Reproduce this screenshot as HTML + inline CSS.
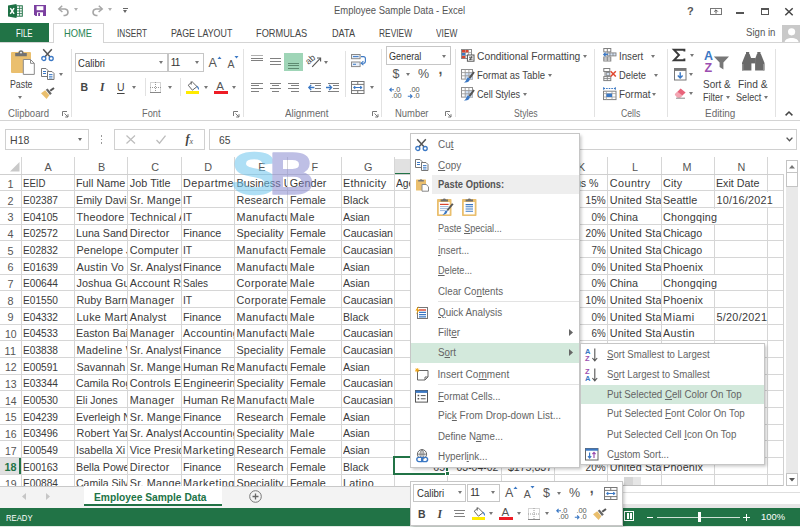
<!DOCTYPE html><html><head><meta charset="utf-8"><title>Employee Sample Data - Excel</title><style>
*{box-sizing:border-box;margin:0;padding:0}
html,body{width:800px;height:527px;overflow:hidden;background:#fff}
body{position:relative;font-family:"Liberation Sans",sans-serif;font-size:11px;color:#444}
.a{position:absolute}
svg{overflow:visible}
.t{position:absolute;white-space:nowrap;line-height:14px}
.dd{position:absolute;width:0;height:0;border-left:2.5px solid transparent;border-right:2.5px solid transparent;border-top:3px solid #777}
.cell{position:absolute;height:17px;line-height:17px;font-size:10.8px;color:#3a3a3a;white-space:nowrap;overflow:hidden}
.vl{position:absolute;width:1px;background:#d9d9d9}
.hl{position:absolute;height:1px;background:#d9d9d9}
u{text-decoration:underline;text-underline-offset:1px;text-decoration-thickness:1px}
</style></head><body>
<div class="a" style="left:0px;top:0px;width:800px;height:22px;background:#fff;"></div>
<div class="t" style="left:333.6px;top:4.4px;font-size:10px;color:#555;transform:scaleX(0.947);transform-origin:0 50%;">Employee Sample Data - Excel</div>
<svg class="a" style="left:8px;top:4px;" width="15" height="14" viewBox="0 0 15 14"><path d="M0 1.6 L8.5 0 V14 L0 12.4Z" fill="#1e7145"/><rect x="8.5" y="1.8" width="5.8" height="10.4" fill="#fff" stroke="#1e7145" stroke-width="1"/><path d="M9 4.4h5M9 7h5M9 9.6h5M11.6 2v10" stroke="#1e7145" stroke-width=".8"/><path d="M2.3 4.2l3.8 5.6M6.1 4.2L2.3 9.8" stroke="#fff" stroke-width="1.5"/></svg>
<svg class="a" style="left:33.5px;top:5px;" width="12" height="11" viewBox="0 0 12 11"><path d="M0 0H12V11H1.5L0 9.5Z" fill="#7b3fa0"/><rect x="2.6" y="1.2" width="6.8" height="4" fill="#fff"/><rect x="3" y="7.3" width="6" height="3.7" fill="#fff"/><rect x="4.2" y="8" width="1.8" height="3" fill="#7b3fa0"/></svg>
<svg class="a" style="left:58px;top:5px;" width="12" height="11" viewBox="0 0 12 11"><path d="M4.2 0.8 L0.8 4 L4.4 7" fill="none" stroke="#a6a6a6" stroke-width="1.5"/><path d="M1 4 H7 A3.6 3.3 0 0 1 7 10.5 H5.5" fill="none" stroke="#a6a6a6" stroke-width="1.6"/></svg>
<div class="dd" style="left:74.0px;top:8.3px;border-top-color:#b0b0b0"></div>
<svg class="a" style="left:91px;top:5px;" width="12" height="11" viewBox="0 0 12 11"><path d="M7.8 0.8 L11.2 4 L7.6 7" fill="none" stroke="#a6a6a6" stroke-width="1.5"/><path d="M11 4 H5 A3.6 3.3 0 0 0 5 10.5 H6.5" fill="none" stroke="#a6a6a6" stroke-width="1.6"/></svg>
<div class="dd" style="left:107.5px;top:8.3px;border-top-color:#b0b0b0"></div>
<div class="a" style="left:122.5px;top:8px;width:5px;height:1px;background:#666;"></div>
<div class="dd" style="left:122.5px;top:10.1px;border-top-color:#666"></div>
<div class="t" style="left:687.0px;top:4.4px;font-size:11px;color:#555;font-weight:bold;">?</div>
<svg class="a" style="left:710px;top:8px;" width="12" height="7" viewBox="0 0 12 7"><rect x=".5" y=".5" width="11" height="6" fill="#fff" stroke="#777" stroke-width="1"/><path d="M6 2v3.6M4.2 3.6L6 1.8l1.8 1.8" stroke="#555" stroke-width="1" fill="none"/></svg>
<div class="a" style="left:736px;top:12px;width:8px;height:2px;background:#555;"></div>
<div class="a" style="left:760.5px;top:7.5px;width:8.5px;height:7.5px;border:1px solid #555;border-top:2px solid #555"></div>
<svg class="a" style="left:785px;top:7.5px;" width="8" height="7.5" viewBox="0 0 8 7.5"><path d="M.3 .3L7.7 7.2M7.7 .3L.3 7.2" stroke="#444" stroke-width="1.5"/></svg>
<div class="a" style="left:0px;top:22px;width:800px;height:21px;background:#fff;"></div>
<div class="a" style="left:0px;top:22.7px;width:49px;height:19.8px;background:#217346;"></div>
<div class="t" style="left:16.3px;top:25.6px;font-size:10.5px;color:#fff;transform:scaleX(0.749);transform-origin:0 50%;">FILE</div>
<div class="a" style="left:53px;top:22.7px;width:51px;height:20.3px;background:#fff;border:1px solid #d4d4d4;border-bottom:none;z-index:2"></div>
<div class="t" style="left:63.9px;top:25.6px;font-size:10.5px;color:#2a8556;transform:scaleX(0.889);transform-origin:0 50%;z-index:3;">HOME</div>
<div class="t" style="left:117.0px;top:25.6px;font-size:10.5px;color:#444;transform:scaleX(0.783);transform-origin:0 50%;">INSERT</div>
<div class="t" style="left:171.2px;top:25.6px;font-size:10.5px;color:#444;transform:scaleX(0.845);transform-origin:0 50%;">PAGE LAYOUT</div>
<div class="t" style="left:256.3px;top:25.6px;font-size:10.5px;color:#444;transform:scaleX(0.878);transform-origin:0 50%;">FORMULAS</div>
<div class="t" style="left:332.0px;top:25.6px;font-size:10.5px;color:#444;transform:scaleX(0.870);transform-origin:0 50%;">DATA</div>
<div class="t" style="left:379.4px;top:25.6px;font-size:10.5px;color:#444;transform:scaleX(0.799);transform-origin:0 50%;">REVIEW</div>
<div class="t" style="left:436.3px;top:25.6px;font-size:10.5px;color:#444;transform:scaleX(0.794);transform-origin:0 50%;">VIEW</div>
<div class="t" style="left:745.6px;top:24.6px;font-size:10.5px;color:#555;transform:scaleX(0.916);transform-origin:0 50%;">Sign in</div>
<div class="a" style="left:781.6px;top:25px;width:18.4px;height:17.5px;background:#c9c9c9;"></div>
<svg class="a" style="left:781.6px;top:25px;" width="18.4" height="17.5" viewBox="0 0 18.4 17.5"><circle cx="9.6" cy="6.8" r="3.6" fill="#fff"/><path d="M2.6 17.5 C2.6 11.5 16.6 11.5 16.6 17.5Z" fill="#fff"/></svg>
<div class="a" style="left:0px;top:42px;width:800px;height:79px;background:#fff;border-top:1px solid #d4d4d4;border-bottom:1px solid #d4d4d4"></div>
<div class="t" style="left:8.2px;top:106.6px;font-size:10px;color:#6a6a6a;transform:scaleX(0.958);transform-origin:0 50%;">Clipboard</div>
<div class="t" style="left:141.7px;top:106.6px;font-size:10px;color:#6a6a6a;transform:scaleX(0.925);transform-origin:0 50%;">Font</div>
<div class="t" style="left:284.5px;top:106.6px;font-size:10px;color:#6a6a6a;transform:scaleX(0.978);transform-origin:0 50%;">Alignment</div>
<div class="t" style="left:394.5px;top:106.6px;font-size:10px;color:#6a6a6a;transform:scaleX(0.942);transform-origin:0 50%;">Number</div>
<div class="t" style="left:513.7px;top:106.6px;font-size:10px;color:#6a6a6a;transform:scaleX(0.863);transform-origin:0 50%;">Styles</div>
<div class="t" style="left:621.2px;top:106.6px;font-size:10px;color:#6a6a6a;transform:scaleX(0.868);transform-origin:0 50%;">Cells</div>
<div class="t" style="left:705.0px;top:106.6px;font-size:10px;color:#6a6a6a;transform:scaleX(0.994);transform-origin:0 50%;">Editing</div>
<div class="a" style="left:71px;top:49px;width:1px;height:68px;background:#e2e2e2;"></div>
<div class="a" style="left:243px;top:49px;width:1px;height:68px;background:#e2e2e2;"></div>
<div class="a" style="left:381px;top:49px;width:1px;height:68px;background:#e2e2e2;"></div>
<div class="a" style="left:454.5px;top:49px;width:1px;height:68px;background:#e2e2e2;"></div>
<div class="a" style="left:594px;top:49px;width:1px;height:68px;background:#e2e2e2;"></div>
<div class="a" style="left:666.5px;top:49px;width:1px;height:68px;background:#e2e2e2;"></div>
<div class="a" style="left:775.3px;top:49px;width:1px;height:68px;background:#e2e2e2;"></div>
<div class="a" style="left:144.5px;top:78px;width:1px;height:18px;background:#e2e2e2;"></div>
<div class="a" style="left:179.5px;top:78px;width:1px;height:18px;background:#e2e2e2;"></div>
<div class="a" style="left:345px;top:51px;width:1px;height:46px;background:#e2e2e2;"></div>
<svg class="a" style="left:61.5px;top:111px;" width="7" height="7" viewBox="0 0 7 7"><path d="M.5 5V.5H5" fill="none" stroke="#777" stroke-width="1"/><path d="M2.5 2.5L6 6M6 3.2V6H3.2" fill="none" stroke="#777" stroke-width="1"/></svg>
<svg class="a" style="left:233px;top:111px;" width="7" height="7" viewBox="0 0 7 7"><path d="M.5 5V.5H5" fill="none" stroke="#777" stroke-width="1"/><path d="M2.5 2.5L6 6M6 3.2V6H3.2" fill="none" stroke="#777" stroke-width="1"/></svg>
<svg class="a" style="left:372px;top:111px;" width="7" height="7" viewBox="0 0 7 7"><path d="M.5 5V.5H5" fill="none" stroke="#777" stroke-width="1"/><path d="M2.5 2.5L6 6M6 3.2V6H3.2" fill="none" stroke="#777" stroke-width="1"/></svg>
<svg class="a" style="left:444.5px;top:111px;" width="7" height="7" viewBox="0 0 7 7"><path d="M.5 5V.5H5" fill="none" stroke="#777" stroke-width="1"/><path d="M2.5 2.5L6 6M6 3.2V6H3.2" fill="none" stroke="#777" stroke-width="1"/></svg>
<svg class="a" style="left:785px;top:110.5px;" width="8" height="5" viewBox="0 0 8 5"><path d="M.6 4.4L4 1L7.4 4.4" fill="none" stroke="#444" stroke-width="1.5"/></svg>
<svg class="a" style="left:10.5px;top:50px;" width="24" height="25" viewBox="0 0 24 25"><rect x="0" y="2" width="20" height="21" rx="1" fill="#eabf6e"/><path d="M4.2 6.2V3H7.4A2.6 2.8 0 0 1 12.6 3H15.8V6.2Z" fill="#737373"/><circle cx="10" cy="2.6" r=".9" fill="#fff"/><path d="M12.3 9.5H19.5L23.3 13.3V24.4H12.3Z" fill="#fff" stroke="#8a8a8a" stroke-width="1"/><path d="M19.5 9.5V13.3H23.3" fill="none" stroke="#8a8a8a" stroke-width="1"/></svg>
<div class="t" style="left:9.5px;top:77.5px;font-size:10px;color:#444;transform:scaleX(0.880);transform-origin:0 50%;">Paste</div>
<div class="dd" style="left:18.0px;top:95.7px;border-top-color:#777"></div>
<svg class="a" style="left:41px;top:48.7px;" width="13" height="12" viewBox="0 0 13 12"><path d="M2.2 .3L9.2 8M10.8 .3L3.8 8" stroke="#555" stroke-width="1.5" fill="none"/><circle cx="2.8" cy="9.5" r="2" fill="none" stroke="#3b78c4" stroke-width="1.3"/><circle cx="10.2" cy="9.5" r="2" fill="none" stroke="#3b78c4" stroke-width="1.3"/></svg>
<svg class="a" style="left:40.5px;top:68px;" width="14" height="12" viewBox="0 0 14 12"><path d="M.5 .5H5L7 2.5V8.5H.5Z" fill="#fff" stroke="#777" stroke-width="1"/><path d="M2 3.5h3M2 5.5h3" stroke="#3b78c4" stroke-width="1"/><path d="M6.5 3.5H11L13 5.5V11.5H6.5Z" fill="#fff" stroke="#777" stroke-width="1"/><path d="M8 6.5h3.5M8 8.3h3.5M8 10h3.5" stroke="#3b78c4" stroke-width=".9"/></svg>
<div class="dd" style="left:58.5px;top:72.5px;border-top-color:#777"></div>
<svg class="a" style="left:41px;top:87px;" width="14" height="12" viewBox="0 0 14 12"><path d="M0 6.3L4.2 3.2L8.4 8.2L5.6 12Z" fill="#eabf6e"/><path d="M4.8 2.8L6.6 1.4L10.8 6.6L9 8Z" fill="#666"/><path d="M8.6 2.9L12.4 .2L13.6 1.8L9.9 4.6Z" fill="#555"/></svg>
<div class="a" style="left:75px;top:52.5px;width:92.5px;height:19px;background:#fff;border:1px solid #c6c6c6"></div>
<div class="t" style="left:78.0px;top:55.5px;font-size:10.5px;color:#333;transform:scaleX(0.907);transform-origin:0 50%;">Calibri</div>
<div class="dd" style="left:158.5px;top:61.0px;border-top-color:#777"></div>
<div class="a" style="left:167.5px;top:52.5px;width:36px;height:19px;background:#fff;border:1px solid #c6c6c6"></div>
<div class="t" style="left:170.7px;top:55.5px;font-size:10px;color:#333;letter-spacing:-0.8px;">11</div>
<div class="dd" style="left:194.5px;top:61.0px;border-top-color:#777"></div>
<div class="t" style="left:208.5px;top:56.0px;font-size:12.5px;color:#555;">A</div>
<svg class="a" style="left:216.5px;top:55.5px;" width="5" height="3" viewBox="0 0 5 3"><path d="M.5 3L2.5 .4L4.5 3Z" fill="#3b78c4"/></svg>
<div class="t" style="left:227.5px;top:57.0px;font-size:10.5px;color:#555;">A</div>
<svg class="a" style="left:234.0px;top:55.5px;" width="5" height="3" viewBox="0 0 5 3"><path d="M.5 0L2.5 2.6L4.5 0Z" fill="#3b78c4"/></svg>
<div class="t" style="left:80.5px;top:80.0px;font-size:10.5px;color:#444;font-weight:bold;">B</div>
<div class="t" style="left:100.0px;top:80.0px;font-size:10.5px;color:#444;font-family:'Liberation Serif',serif;font-style:italic;font-weight:bold;font-size:11.5px;">I</div>
<div class="t" style="left:117.0px;top:79.5px;font-size:10.5px;color:#444;text-decoration:underline;text-underline-offset:1.5px;">U</div>
<div class="dd" style="left:132.0px;top:86.0px;border-top-color:#777"></div>
<svg class="a" style="left:150px;top:82px;" width="11" height="11" viewBox="0 0 11 11"><rect x=".5" y=".5" width="10" height="10" fill="none" stroke="#aaa" stroke-width="1" stroke-dasharray="1 1"/><path d="M5.5 0V11M0 5.5H11" stroke="#999" stroke-width="1" stroke-dasharray="1 1"/><path d="M0 10.5H11" stroke="#888" stroke-width="1"/></svg>
<div class="dd" style="left:168.0px;top:86.0px;border-top-color:#777"></div>
<svg class="a" style="left:186px;top:81px;" width="14" height="13" viewBox="0 0 14 13"><path d="M2.2 4.2L6.2 .8L11 5.6L6.4 9.2Z" fill="#fff" stroke="#666" stroke-width="1"/><path d="M5.2 .3V3.6" stroke="#666" stroke-width="1"/><path d="M10.6 4.6C12.4 5.4 13.2 7 13 9C12 8.2 11 7 10.6 4.6Z" fill="#3b78c4"/><rect x="0" y="10" width="13" height="3" fill="#ffeb00"/></svg>
<div class="dd" style="left:203.5px;top:86.0px;border-top-color:#777"></div>
<div class="t" style="left:216.2px;top:78.5px;font-size:11.5px;color:#555;">A</div>
<div class="a" style="left:214px;top:91px;width:13.5px;height:3px;background:#ee1c25;"></div>
<div class="dd" style="left:232.0px;top:86.0px;border-top-color:#777"></div>
<div class="a" style="left:251px;top:54.7px;width:11.5px;height:1px;background:#b0b0b0;"></div>
<div class="a" style="left:251.0px;top:57.5px;width:11.5px;height:1px;background:#808080;"></div>
<div class="a" style="left:251.0px;top:60.3px;width:11.5px;height:1px;background:#808080;"></div>
<div class="a" style="left:269.5px;top:58.2px;width:11.5px;height:1px;background:#808080;"></div>
<div class="a" style="left:269.5px;top:61.0px;width:11.5px;height:1px;background:#808080;"></div>
<div class="a" style="left:269.5px;top:63.800000000000004px;width:11.5px;height:1px;background:#808080;"></div>
<div class="a" style="left:284px;top:52.5px;width:18.5px;height:18.5px;background:#9fd5b7;"></div>
<div class="a" style="left:287.5px;top:62.5px;width:11.5px;height:1px;background:#5d8a70;"></div>
<div class="a" style="left:287.5px;top:65.3px;width:11.5px;height:1px;background:#5d8a70;"></div>
<div class="a" style="left:287.5px;top:68.1px;width:11.5px;height:1px;background:#5d8a70;"></div>
<svg class="a" style="left:307.5px;top:54px;" width="14" height="13" viewBox="0 0 14 13"><path d="M4.2 12.8L12.2 4.4" stroke="#555" stroke-width="1.1"/><path d="M9 4L12.6 4L12.6 7.6" fill="none" stroke="#555" stroke-width="1.1"/><text x="-1" y="8.6" font-size="9" font-family="Liberation Sans, sans-serif" fill="#444" transform="rotate(-42 3 8)">ab</text></svg>
<div class="dd" style="left:323.5px;top:61.0px;border-top-color:#777"></div>
<svg class="a" style="left:351px;top:54.4px;" width="15.5" height="13.6" viewBox="0 0 15.5 13.6"><rect x=".5" y=".5" width="8.6" height="4.2" fill="#e6edf7" stroke="#8a8a8a" stroke-width="1"/><rect x=".5" y="8" width="8.6" height="4.6" fill="#e6edf7" stroke="#8a8a8a" stroke-width="1"/><path d="M2 2.6h5.6M2 10.3h3" stroke="#3b78c4" stroke-width="1"/><path d="M10 2.6H12.4A2 2 0 0 1 14.4 4.6V7.2A2 2 0 0 1 12.4 9.2H10.4" fill="none" stroke="#3b78c4" stroke-width="1.1"/><path d="M12.4 7.2L10.2 9.2L12.4 11.2" fill="none" stroke="#3b78c4" stroke-width="1.1"/></svg>
<div class="a" style="left:251.0px;top:82.5px;width:11.5px;height:1px;background:#808080;"></div>
<div class="a" style="left:251.0px;top:85.4px;width:8px;height:1px;background:#808080;"></div>
<div class="a" style="left:251.0px;top:88.3px;width:11.5px;height:1px;background:#808080;"></div>
<div class="a" style="left:251.0px;top:91.2px;width:8px;height:1px;background:#808080;"></div>
<div class="a" style="left:269.5px;top:82.5px;width:11.5px;height:1px;background:#808080;"></div>
<div class="a" style="left:271.5px;top:85.4px;width:7.5px;height:1px;background:#808080;"></div>
<div class="a" style="left:269.5px;top:88.3px;width:11.5px;height:1px;background:#808080;"></div>
<div class="a" style="left:271.5px;top:91.2px;width:7.5px;height:1px;background:#808080;"></div>
<div class="a" style="left:287.5px;top:82.5px;width:11.5px;height:1px;background:#808080;"></div>
<div class="a" style="left:291.0px;top:85.4px;width:8px;height:1px;background:#808080;"></div>
<div class="a" style="left:287.5px;top:88.3px;width:11.5px;height:1px;background:#808080;"></div>
<div class="a" style="left:291.0px;top:91.2px;width:8px;height:1px;background:#808080;"></div>
<div class="a" style="left:310.0px;top:82.5px;width:11px;height:1px;background:#808080;"></div>
<div class="a" style="left:314.5px;top:85.4px;width:6.5px;height:1px;background:#808080;"></div>
<div class="a" style="left:314.5px;top:88.3px;width:6.5px;height:1px;background:#808080;"></div>
<div class="a" style="left:310.0px;top:91.2px;width:11px;height:1px;background:#808080;"></div>
<svg class="a" style="left:307.5px;top:83.9px;" width="7" height="7" viewBox="0 0 7 7"><path d="M6.4 3.5H.8M3.2 .9L.8 3.5L3.2 6.1" fill="none" stroke="#3b78c4" stroke-width="1.3"/></svg>
<div class="a" style="left:328.2px;top:82.5px;width:11px;height:1px;background:#808080;"></div>
<div class="a" style="left:332.7px;top:85.4px;width:6.5px;height:1px;background:#808080;"></div>
<div class="a" style="left:332.7px;top:88.3px;width:6.5px;height:1px;background:#808080;"></div>
<div class="a" style="left:328.2px;top:91.2px;width:11px;height:1px;background:#808080;"></div>
<svg class="a" style="left:325.7px;top:83.9px;" width="7" height="7" viewBox="0 0 7 7"><path d="M0 3.5H5.6M3.2 .9L5.6 3.5L3.2 6.1" fill="none" stroke="#3b78c4" stroke-width="1.3"/></svg>
<svg class="a" style="left:351px;top:81px;" width="13.5" height="13" viewBox="0 0 13.5 13"><rect x=".5" y=".5" width="12.5" height="12" fill="#fff" stroke="#777" stroke-width="1"/><path d="M.5 3.4H13M.5 9.6H13M6.75 .5V3.4M6.75 9.6V12.5" stroke="#777" stroke-width="1"/><path d="M2.8 6.5H10.7M4.2 5.1L2.8 6.5L4.2 7.9M9.3 5.1L10.7 6.5L9.3 7.9" fill="none" stroke="#3b78c4" stroke-width="1.1"/></svg>
<div class="dd" style="left:369.5px;top:86.0px;border-top-color:#777"></div>
<div class="a" style="left:386px;top:46px;width:65px;height:19px;background:#fff;border:1px solid #c6c6c6"></div>
<div class="t" style="left:388.7px;top:48.8px;font-size:10.5px;color:#333;transform:scaleX(0.865);transform-origin:0 50%;">General</div>
<div class="dd" style="left:442.0px;top:54.5px;border-top-color:#777"></div>
<div class="t" style="left:392.5px;top:67.0px;font-size:12.5px;color:#555;">$</div>
<div class="dd" style="left:406.2px;top:73.0px;border-top-color:#777"></div>
<div class="t" style="left:418.0px;top:67.0px;font-size:12.5px;color:#555;">%</div>
<div class="t" style="left:438.5px;top:61.5px;font-size:14px;color:#555;font-weight:bold;">,</div>
<svg class="a" style="left:388.7px;top:87.3px;" width="12" height="12" viewBox="0 0 12 12"><text x="5.2" y="5" font-size="7.4" font-family="Liberation Sans, sans-serif" fill="#555">.0</text><text x="2.4" y="11" font-size="7.4" font-family="Liberation Sans, sans-serif" fill="#555">.00</text><path d="M5 2.7H.8M2.6 .9L.8 2.7L2.6 4.5" fill="none" stroke="#3b78c4" stroke-width="1.1"/></svg>
<svg class="a" style="left:407.3px;top:87.3px;" width="12" height="12" viewBox="0 0 12 12"><text x="2.4" y="5" font-size="7.4" font-family="Liberation Sans, sans-serif" fill="#555">.00</text><text x="6.4" y="11" font-size="7.4" font-family="Liberation Sans, sans-serif" fill="#555">.0</text><path d="M.8 9.3H5M3.2 7.5L5 9.3L3.2 11.1" fill="none" stroke="#3b78c4" stroke-width="1.1"/></svg>
<svg class="a" style="left:460.7px;top:48.7px;" width="13.5" height="12.5" viewBox="0 0 13.5 12.5"><rect x=".5" y=".5" width="10" height="9" fill="#fff" stroke="#8a8a8a"/><path d="M.5 3.6H10.5M.5 6.6H10.5M4.4 .5V9.5M7.6 .5V9.5" stroke="#9a9a9a" stroke-width=".8"/><rect x="1" y="1" width="3.2" height="2.4" fill="#d9442f"/><rect x="1" y="4" width="3.2" height="2.4" fill="#3b78c4"/><rect x="1" y="7" width="3.2" height="2.2" fill="#d9442f"/><rect x="4.8" y="1" width="2.6" height="2.4" fill="#d9442f"/><rect x="6.4" y="6" width="6.6" height="6.2" fill="#fff" stroke="#555"/><path d="M8 8.2h3.6M8 10.2h3.6M10.8 7.2l-1.8 4" stroke="#444" stroke-width=".9"/></svg>
<div class="t" style="left:477.0px;top:48.8px;font-size:10.5px;color:#444;transform:scaleX(0.978);transform-origin:0 50%;">Conditional Formatting</div>
<div class="dd" style="left:582.5px;top:54.5px;border-top-color:#777"></div>
<svg class="a" style="left:460.7px;top:68.5px;" width="14" height="14" viewBox="0 0 14 14"><rect x=".5" y=".5" width="11" height="9.6" fill="#fff" stroke="#8f8f8f"/><rect x="4.2" y="3.6" width="7.3" height="6.5" fill="#cfdff3"/><path d="M.5 3.6H11.5M.5 6.8H11.5M4.2 .5V10M7.9 .5V10" stroke="#9a9a9a" stroke-width=".9"/><path d="M13.8 3.6L9.4 9.8L7.6 8.6L12.2 2.4Z" fill="#555"/><path d="M9 9.4C9 12 6.6 14 2.8 13.4C4.8 12.6 5.2 10.6 6.6 8.4Z" fill="#3b78c4"/></svg>
<div class="t" style="left:477.0px;top:67.6px;font-size:10.5px;color:#444;transform:scaleX(0.906);transform-origin:0 50%;">Format as Table</div>
<div class="dd" style="left:547.5px;top:73.5px;border-top-color:#777"></div>
<svg class="a" style="left:460.7px;top:87.3px;" width="14" height="14" viewBox="0 0 14 14"><rect x=".5" y=".5" width="11" height="9.6" fill="#fff" stroke="#8f8f8f"/><rect x="4.2" y="3.6" width="7.3" height="6.5" fill="#cfdff3"/><path d="M.5 3.6H11.5M.5 6.8H11.5M4.2 .5V10M7.9 .5V10" stroke="#9a9a9a" stroke-width=".9"/><path d="M13.8 3.6L9.4 9.8L7.6 8.6L12.2 2.4Z" fill="#555"/><path d="M9 9.4C9 12 6.6 14 2.8 13.4C4.8 12.6 5.2 10.6 6.6 8.4Z" fill="#3b78c4"/></svg>
<div class="t" style="left:477.0px;top:86.8px;font-size:10.5px;color:#444;transform:scaleX(0.867);transform-origin:0 50%;">Cell Styles</div>
<div class="dd" style="left:523.0px;top:92.8px;border-top-color:#777"></div>
<svg class="a" style="left:602.5px;top:48.2px;" width="13.5" height="13.5" viewBox="0 0 13.5 13.5"><rect x=".8" y=".5" width="7" height="3.4" fill="#fff" stroke="#808080"/><path d="M4.3 .5V3.9" stroke="#808080"/><rect x="4" y="4.9" width="9" height="3" fill="#d3e1f3" stroke="#808080" stroke-width=".9"/><path d="M7 4.9V7.9M10 4.9V7.9" stroke="#808080" stroke-width=".8"/><rect x=".8" y="9" width="7" height="4" fill="#fff" stroke="#808080"/><path d="M4.3 9V13M.8 11H7.8" stroke="#808080" stroke-width=".9"/><path d="M5 6.4H.8M2.6 4.6L.8 6.4L2.6 8.2" fill="none" stroke="#3b78c4" stroke-width="1.3"/></svg>
<div class="t" style="left:618.5px;top:49.0px;font-size:10.5px;color:#444;transform:scaleX(0.922);transform-origin:0 50%;">Insert</div>
<div class="dd" style="left:650.5px;top:54.5px;border-top-color:#777"></div>
<svg class="a" style="left:602.5px;top:67.5px;" width="13.5" height="13" viewBox="0 0 13.5 13"><rect x=".8" y=".5" width="6" height="3" fill="#fff" stroke="#808080"/><rect x="3.2" y="4.6" width="3.6" height="2.8" fill="#d3e1f3" stroke="#808080" stroke-width=".9"/><rect x=".8" y="8.6" width="7" height="4" fill="#fff" stroke="#808080"/><path d="M4.3 8.6V12.6M.8 10.6H7.8M2 3.5V8.6" stroke="#808080" stroke-width=".9"/><path d="M7.6 3.2L12.8 8.6M12.8 3.2L7.6 8.6" stroke="#e0472f" stroke-width="1.5"/></svg>
<div class="t" style="left:618.5px;top:68.2px;font-size:10.5px;color:#444;transform:scaleX(0.890);transform-origin:0 50%;">Delete</div>
<div class="dd" style="left:654.0px;top:74.0px;border-top-color:#777"></div>
<svg class="a" style="left:602.5px;top:86.7px;" width="13.5" height="13" viewBox="0 0 13.5 13"><path d="M.5 1.5h12" stroke="#3b78c4" stroke-width="1" stroke-dasharray="1.6 1"/><path d="M.7 .2v2.6M12.3 .2v2.6" stroke="#3b78c4" stroke-width="1"/><rect x=".5" y="4.2" width="12.5" height="8.4" fill="#fff" stroke="#808080"/><path d="M.5 6.6H13M.5 10H13M3.4 4.2V12.6M9 4.2V12.6" stroke="#a0a0a0" stroke-width=".8"/><rect x="3.4" y="6.6" width="5.6" height="3.4" fill="#3b78c4"/></svg>
<div class="t" style="left:618.5px;top:87.2px;font-size:10.5px;color:#444;transform:scaleX(0.947);transform-origin:0 50%;">Format</div>
<div class="dd" style="left:651.5px;top:93.0px;border-top-color:#777"></div>
<svg class="a" style="left:673px;top:48.8px;" width="12" height="12" viewBox="0 0 12 12"><path d="M11.4 2.6V.7H.9L6 6L.9 11.3H11.4V9.4" fill="none" stroke="#3a3a3a" stroke-width="1.9"/></svg>
<div class="dd" style="left:690.2px;top:53.5px;border-top-color:#777"></div>
<svg class="a" style="left:673.5px;top:67.5px;" width="12.5" height="12.5" viewBox="0 0 12.5 12.5"><rect x=".5" y=".5" width="11.5" height="11.5" fill="#fff" stroke="#777"/><rect x=".5" y=".5" width="11.5" height="2.4" fill="#777"/><path d="M6.2 4.2V10M3.8 7.6L6.2 10L8.6 7.6" fill="none" stroke="#3b78c4" stroke-width="1.4"/></svg>
<div class="dd" style="left:689.0px;top:72.5px;border-top-color:#777"></div>
<svg class="a" style="left:673.5px;top:88px;" width="12.5" height="10.5" viewBox="0 0 12.5 10.5"><path d="M.8 6.4L6.6 .6L11.6 4.4L6.2 9.6H3.6Z" fill="#e8637a"/><path d="M.8 6.4L3.4 3.8L8.6 7.6L6.2 9.6H3.6Z" fill="#f3a6b3"/><path d="M2 10.2H11" stroke="#888" stroke-width="1"/></svg>
<div class="dd" style="left:689.0px;top:92.0px;border-top-color:#777"></div>
<svg class="a" style="left:704px;top:50px;" width="25" height="23" viewBox="0 0 25 23"><text x="0" y="9.6" font-size="12.5" font-weight="bold" font-family="Liberation Sans, sans-serif" fill="#3b78c4">A</text><text x=".6" y="22" font-size="12.5" font-weight="bold" font-family="Liberation Sans, sans-serif" fill="#9b4fb0">Z</text><path d="M9.8 6.4H25L19.4 12.4V19.4L15.6 17V12.4Z" fill="#777"/></svg>
<div class="t" style="left:703.0px;top:77.2px;font-size:10.5px;color:#444;transform:scaleX(0.949);transform-origin:0 50%;">Sort &amp;</div>
<div class="t" style="left:703.0px;top:90.3px;font-size:10.5px;color:#444;transform:scaleX(0.857);transform-origin:0 50%;">Filter</div>
<div class="dd" style="left:726.0px;top:96.3px;border-top-color:#777"></div>
<svg class="a" style="left:741.5px;top:51.5px;" width="22.5" height="19" viewBox="0 0 22.5 19"><path d="M3.6 2H7.6L9.4 7V18.4H0V11Z" fill="#6a6a6a"/><path d="M18.9 2H14.9L13.1 7V18.4H22.5V11Z" fill="#6a6a6a"/><rect x="9" y="6" width="4.5" height="5.4" fill="#6a6a6a"/><rect x="4" y="0" width="3.2" height="2.4" fill="#6a6a6a"/><rect x="15.3" y="0" width="3.2" height="2.4" fill="#6a6a6a"/><path d="M.8 12V18.4M21.7 12V18.4" stroke="#999" stroke-width="1.2"/></svg>
<div class="t" style="left:738.0px;top:77.2px;font-size:10.5px;color:#444;transform:scaleX(0.972);transform-origin:0 50%;">Find &amp;</div>
<div class="t" style="left:736.2px;top:90.3px;font-size:10.5px;color:#444;transform:scaleX(0.867);transform-origin:0 50%;">Select</div>
<div class="dd" style="left:763.7px;top:96.3px;border-top-color:#777"></div>
<div class="a" style="left:0px;top:123px;width:800px;height:34px;background:#fff;"></div>
<div class="a" style="left:5px;top:129px;width:83.5px;height:20.5px;background:#fff;border:1px solid #d0d0d0"></div>
<div class="t" style="left:10.0px;top:132.6px;font-size:10.5px;color:#444;letter-spacing:0.08px;">H18</div>
<div class="dd" style="left:77.5px;top:137.5px;border-top-color:#666"></div>
<div class="a" style="left:100.5px;top:135.3px;width:1.5px;height:1.5px;background:#999;"></div>
<div class="a" style="left:100.5px;top:138.8px;width:1.5px;height:1.5px;background:#999;"></div>
<div class="a" style="left:100.5px;top:142.3px;width:1.5px;height:1.5px;background:#999;"></div>
<div class="a" style="left:114px;top:129px;width:91px;height:20.5px;background:#fff;border:1px solid #d0d0d0"></div>
<svg class="a" style="left:125.7px;top:135px;" width="10" height="9" viewBox="0 0 10 9"><path d="M.5 .5L9 8.5M9 .5L.5 8.5" stroke="#bdbdbd" stroke-width="1.2"/></svg>
<svg class="a" style="left:155.5px;top:135px;" width="10" height="9" viewBox="0 0 10 9"><path d="M.5 5L3.5 8.2L9.5 .6" fill="none" stroke="#bdbdbd" stroke-width="1.3"/></svg>
<div class="t" style="left:185.5px;top:132.3px;font-size:12px;color:#444;font-family:'Liberation Serif',serif;font-style:italic;font-weight:bold;">f</div>
<div class="t" style="left:189.5px;top:134.5px;font-size:8px;color:#555;font-family:'Liberation Serif',serif;font-style:italic;">x</div>
<div class="a" style="left:208.5px;top:128.5px;width:588.5px;height:21px;background:#fff;border:1px solid #d0d0d0"></div>
<div class="t" style="left:218.5px;top:132.8px;font-size:10.5px;color:#444;transform:scaleX(0.985);transform-origin:0 50%;">65</div>
<svg class="a" style="left:786px;top:136.5px;" width="7" height="4.5" viewBox="0 0 7 4.5"><path d="M.6 .6L3.5 3.8L6.4 .6" fill="none" stroke="#555" stroke-width="1.4"/></svg>
<div class="a" style="left:0px;top:157px;width:783px;height:329px;background:#fff;"></div>
<div class="a" style="left:394.56px;top:158.8px;width:53.33px;height:15.7px;background:#e1e1e1;border-bottom:1.8px solid #217346"></div>
<div class="t" style="left:44.6px;top:159.5px;font-size:10.8px;color:#555;">A</div>
<div class="t" style="left:97.9px;top:159.5px;font-size:10.8px;color:#555;">B</div>
<div class="t" style="left:151.2px;top:159.5px;font-size:10.8px;color:#555;">C</div>
<div class="t" style="left:204.2px;top:159.5px;font-size:10.8px;color:#555;">D</div>
<div class="t" style="left:258.3px;top:159.5px;font-size:10.8px;color:#555;">E</div>
<div class="t" style="left:311.6px;top:159.5px;font-size:10.8px;color:#555;">F</div>
<div class="t" style="left:364.1px;top:159.5px;font-size:10.8px;color:#555;">G</div>
<div class="t" style="left:417.5px;top:159.5px;font-size:10.8px;color:#217346;">H</div>
<div class="t" style="left:472.9px;top:159.5px;font-size:10.8px;color:#555;">I</div>
<div class="t" style="left:525.8px;top:159.5px;font-size:10.8px;color:#555;">J</div>
<div class="t" style="left:577.9px;top:159.5px;font-size:10.8px;color:#555;">K</div>
<div class="t" style="left:632.0px;top:159.5px;font-size:10.8px;color:#555;">L</div>
<div class="t" style="left:682.5px;top:159.5px;font-size:10.8px;color:#555;">M</div>
<div class="t" style="left:737.5px;top:159.5px;font-size:10.8px;color:#555;">N</div>
<svg class="a" style="left:9.5px;top:162px;" width="9.5" height="9.5" viewBox="0 0 9.5 9.5"><path d="M9.5 0V9.5H0Z" fill="#c9c9c9"/></svg>
<div class="vl" style="left:20.8px;top:157px;height:329px;background:#d6d6d6"></div>
<div class="vl" style="left:74.1px;top:157px;height:329px;background:#d6d6d6"></div>
<div class="vl" style="left:127.4px;top:157px;height:329px;background:#d6d6d6"></div>
<div class="vl" style="left:180.7px;top:157px;height:329px;background:#d6d6d6"></div>
<div class="vl" style="left:234.1px;top:157px;height:329px;background:#d6d6d6"></div>
<div class="vl" style="left:287.4px;top:157px;height:329px;background:#d6d6d6"></div>
<div class="vl" style="left:340.7px;top:157px;height:329px;background:#d6d6d6"></div>
<div class="vl" style="left:394.1px;top:157px;height:329px;background:#d6d6d6"></div>
<div class="vl" style="left:447.4px;top:157px;height:329px;background:#d6d6d6"></div>
<div class="vl" style="left:500.7px;top:157px;height:329px;background:#d6d6d6"></div>
<div class="vl" style="left:554.0px;top:157px;height:329px;background:#d6d6d6"></div>
<div class="vl" style="left:607.4px;top:157px;height:329px;background:#d6d6d6"></div>
<div class="vl" style="left:660.7px;top:157px;height:329px;background:#d6d6d6"></div>
<div class="vl" style="left:714.0px;top:157px;height:329px;background:#d6d6d6"></div>
<div class="vl" style="left:767.4px;top:157px;height:329px;background:#d6d6d6"></div>
<div class="hl" style="left:0;top:173.7px;width:783px;background:#cfcfcf"></div>
<div class="hl" style="left:0;top:190.4px;width:783px;background:#d6d6d6"></div>
<div class="hl" style="left:0;top:207.0px;width:783px;background:#d6d6d6"></div>
<div class="hl" style="left:0;top:223.7px;width:783px;background:#d6d6d6"></div>
<div class="hl" style="left:0;top:240.4px;width:783px;background:#d6d6d6"></div>
<div class="hl" style="left:0;top:257.1px;width:783px;background:#d6d6d6"></div>
<div class="hl" style="left:0;top:273.7px;width:783px;background:#d6d6d6"></div>
<div class="hl" style="left:0;top:290.4px;width:783px;background:#d6d6d6"></div>
<div class="hl" style="left:0;top:307.1px;width:783px;background:#d6d6d6"></div>
<div class="hl" style="left:0;top:323.7px;width:783px;background:#d6d6d6"></div>
<div class="hl" style="left:0;top:340.4px;width:783px;background:#d6d6d6"></div>
<div class="hl" style="left:0;top:357.1px;width:783px;background:#d6d6d6"></div>
<div class="hl" style="left:0;top:373.7px;width:783px;background:#d6d6d6"></div>
<div class="hl" style="left:0;top:390.4px;width:783px;background:#d6d6d6"></div>
<div class="hl" style="left:0;top:407.1px;width:783px;background:#d6d6d6"></div>
<div class="hl" style="left:0;top:423.8px;width:783px;background:#d6d6d6"></div>
<div class="hl" style="left:0;top:440.4px;width:783px;background:#d6d6d6"></div>
<div class="hl" style="left:0;top:457.1px;width:783px;background:#d6d6d6"></div>
<div class="hl" style="left:0;top:473.8px;width:783px;background:#d6d6d6"></div>
<div class="t" style="left:7.4px;top:176.8px;font-size:10.8px;color:#555;">1</div>
<div class="cell" style="left:21.8px;top:175.2px;width:52.3px;padding-left:1.4px"><span style="display:inline-block;transform:scaleX(0.893);transform-origin:0 50%">EEID</span></div>
<div class="cell" style="left:75.1px;top:175.2px;width:52.3px;padding-left:1.4px"><span style="display:inline-block;transform:scaleX(0.999);transform-origin:0 50%">Full Name</span></div>
<div class="cell" style="left:128.4px;top:175.2px;width:52.3px;padding-left:1.4px"><span style="letter-spacing:0.07px">Job Title</span></div>
<div class="cell" style="left:181.7px;top:175.2px;width:52.3px;padding-left:1.4px"><span style="letter-spacing:0.44px">Department</span></div>
<div class="cell" style="left:235.1px;top:175.2px;width:52.3px;padding-left:1.4px"><span style="letter-spacing:0.05px">Business Unit</span></div>
<div class="cell" style="left:288.4px;top:175.2px;width:52.3px;padding-left:1.4px"><span style="letter-spacing:0.11px">Gender</span></div>
<div class="cell" style="left:341.7px;top:175.2px;width:52.3px;padding-left:1.4px"><span style="letter-spacing:0.28px">Ethnicity</span></div>
<div class="cell" style="left:395.1px;top:175.2px;width:52.3px;padding-left:1.4px"><span style="display:inline-block;transform:scaleX(0.954);transform-origin:0 50%">Age</span></div>
<div class="cell" style="left:555.0px;top:175.2px;width:52.3px;padding-left:1.4px"><span style="display:inline-block;transform:scaleX(0.983);transform-origin:0 50%">Bonus %</span></div>
<div class="cell" style="left:608.4px;top:175.2px;width:52.3px;padding-left:1.4px"><span style="letter-spacing:0.43px">Country</span></div>
<div class="cell" style="left:661.7px;top:175.2px;width:52.3px;padding-left:1.4px"><span style="letter-spacing:0.14px">City</span></div>
<div class="cell" style="left:715.0px;top:175.2px;width:70.0px;padding-left:1.4px"><span style="display:inline-block;transform:scaleX(0.989);transform-origin:0 50%">Exit Date</span></div>
<div class="t" style="left:7.4px;top:193.5px;font-size:10.8px;color:#555;">2</div>
<div class="cell" style="left:21.8px;top:191.9px;width:52.3px;padding-left:1.4px"><span style="display:inline-block;transform:scaleX(0.940);transform-origin:0 50%">E02387</span></div>
<div class="cell" style="left:75.1px;top:191.9px;width:52.3px;padding-left:1.4px"><span style="display:inline-block;transform:scaleX(0.990);transform-origin:0 50%">Emily Davis</span></div>
<div class="cell" style="left:128.4px;top:191.9px;width:52.3px;padding-left:1.4px"><span style="letter-spacing:0.22px">Sr. Manger</span></div>
<div class="cell" style="left:181.7px;top:191.9px;width:52.3px;padding-left:1.4px"><span style="display:inline-block;transform:scaleX(0.955);transform-origin:0 50%">IT</span></div>
<div class="cell" style="left:235.1px;top:191.9px;width:52.3px;padding-left:1.4px"><span style="letter-spacing:0.13px">Research &amp; Development</span></div>
<div class="cell" style="left:288.4px;top:191.9px;width:52.3px;padding-left:1.4px"><span style="display:inline-block;transform:scaleX(0.995);transform-origin:0 50%">Female</span></div>
<div class="cell" style="left:341.7px;top:191.9px;width:52.3px;padding-left:1.4px"><span style="display:inline-block;transform:scaleX(0.978);transform-origin:0 50%">Black</span></div>
<div class="cell" style="left:555.0px;top:191.9px;width:52.3px;text-align:right;padding-right:2px"><span style="display:inline-block;transform:scaleX(0.925);transform-origin:100% 50%">15%</span></div>
<div class="cell" style="left:608.4px;top:191.9px;width:52.3px;padding-left:1.4px"><span style="letter-spacing:0.14px">United States</span></div>
<div class="cell" style="left:661.7px;top:191.9px;width:52.3px;padding-left:1.4px"><span style="letter-spacing:0.08px">Seattle</span></div>
<div class="a" style="left:767px;top:192px;width:1px;height:15px;background:#fff;"></div>
<div class="cell" style="left:715.0px;top:191.9px;width:70.0px;padding-left:1.4px"><span style="letter-spacing:0.26px">10/16/2021</span></div>
<div class="t" style="left:7.4px;top:210.1px;font-size:10.8px;color:#555;">3</div>
<div class="cell" style="left:21.8px;top:208.5px;width:52.3px;padding-left:1.4px"><span style="display:inline-block;transform:scaleX(0.940);transform-origin:0 50%">E04105</span></div>
<div class="cell" style="left:75.1px;top:208.5px;width:52.3px;padding-left:1.4px"><span style="letter-spacing:0.21px">Theodore Dinh</span></div>
<div class="cell" style="left:128.4px;top:208.5px;width:52.3px;padding-left:1.4px"><span style="letter-spacing:0.16px">Technical Architect</span></div>
<div class="cell" style="left:181.7px;top:208.5px;width:52.3px;padding-left:1.4px"><span style="display:inline-block;transform:scaleX(0.955);transform-origin:0 50%">IT</span></div>
<div class="cell" style="left:235.1px;top:208.5px;width:52.3px;padding-left:1.4px"><span style="letter-spacing:0.44px">Manufacturing</span></div>
<div class="cell" style="left:288.4px;top:208.5px;width:52.3px;padding-left:1.4px"><span style="letter-spacing:0.40px">Male</span></div>
<div class="cell" style="left:341.7px;top:208.5px;width:52.3px;padding-left:1.4px"><span style="display:inline-block;transform:scaleX(0.987);transform-origin:0 50%">Asian</span></div>
<div class="cell" style="left:555.0px;top:208.5px;width:52.3px;text-align:right;padding-right:2px"><span style="display:inline-block;transform:scaleX(0.908);transform-origin:100% 50%">0%</span></div>
<div class="cell" style="left:608.4px;top:208.5px;width:52.3px;padding-left:1.4px"><span style="letter-spacing:0.02px">China</span></div>
<div class="a" style="left:714px;top:209px;width:1px;height:15px;background:#fff;"></div>
<div class="cell" style="left:661.7px;top:208.5px;width:70.0px;padding-left:1.4px"><span style="letter-spacing:0.21px">Chongqing</span></div>
<div class="t" style="left:7.4px;top:226.8px;font-size:10.8px;color:#555;">4</div>
<div class="cell" style="left:21.8px;top:225.2px;width:52.3px;padding-left:1.4px"><span style="display:inline-block;transform:scaleX(0.940);transform-origin:0 50%">E02572</span></div>
<div class="cell" style="left:75.1px;top:225.2px;width:52.3px;padding-left:1.4px"><span style="display:inline-block;transform:scaleX(0.991);transform-origin:0 50%">Luna Sanders</span></div>
<div class="cell" style="left:128.4px;top:225.2px;width:52.3px;padding-left:1.4px"><span style="letter-spacing:0.27px">Director</span></div>
<div class="cell" style="left:181.7px;top:225.2px;width:52.3px;padding-left:1.4px"><span style="display:inline-block;transform:scaleX(0.998);transform-origin:0 50%">Finance</span></div>
<div class="cell" style="left:235.1px;top:225.2px;width:52.3px;padding-left:1.4px"><span style="letter-spacing:0.12px">Speciality Products</span></div>
<div class="cell" style="left:288.4px;top:225.2px;width:52.3px;padding-left:1.4px"><span style="display:inline-block;transform:scaleX(0.995);transform-origin:0 50%">Female</span></div>
<div class="cell" style="left:341.7px;top:225.2px;width:52.3px;padding-left:1.4px"><span style="display:inline-block;transform:scaleX(0.980);transform-origin:0 50%">Caucasian</span></div>
<div class="cell" style="left:555.0px;top:225.2px;width:52.3px;text-align:right;padding-right:2px"><span style="display:inline-block;transform:scaleX(0.925);transform-origin:100% 50%">20%</span></div>
<div class="cell" style="left:608.4px;top:225.2px;width:52.3px;padding-left:1.4px"><span style="letter-spacing:0.14px">United States</span></div>
<div class="cell" style="left:661.7px;top:225.2px;width:52.3px;padding-left:1.4px"><span style="display:inline-block;transform:scaleX(0.988);transform-origin:0 50%">Chicago</span></div>
<div class="t" style="left:7.4px;top:243.5px;font-size:10.8px;color:#555;">5</div>
<div class="cell" style="left:21.8px;top:241.9px;width:52.3px;padding-left:1.4px"><span style="display:inline-block;transform:scaleX(0.940);transform-origin:0 50%">E02832</span></div>
<div class="cell" style="left:75.1px;top:241.9px;width:52.3px;padding-left:1.4px"><span style="letter-spacing:0.11px">Penelope Jordan</span></div>
<div class="cell" style="left:128.4px;top:241.9px;width:52.3px;padding-left:1.4px"><span style="letter-spacing:0.21px">Computer Systems Manager</span></div>
<div class="cell" style="left:181.7px;top:241.9px;width:52.3px;padding-left:1.4px"><span style="display:inline-block;transform:scaleX(0.955);transform-origin:0 50%">IT</span></div>
<div class="cell" style="left:235.1px;top:241.9px;width:52.3px;padding-left:1.4px"><span style="letter-spacing:0.44px">Manufacturing</span></div>
<div class="cell" style="left:288.4px;top:241.9px;width:52.3px;padding-left:1.4px"><span style="display:inline-block;transform:scaleX(0.995);transform-origin:0 50%">Female</span></div>
<div class="cell" style="left:341.7px;top:241.9px;width:52.3px;padding-left:1.4px"><span style="display:inline-block;transform:scaleX(0.980);transform-origin:0 50%">Caucasian</span></div>
<div class="cell" style="left:555.0px;top:241.9px;width:52.3px;text-align:right;padding-right:2px"><span style="display:inline-block;transform:scaleX(0.908);transform-origin:100% 50%">7%</span></div>
<div class="cell" style="left:608.4px;top:241.9px;width:52.3px;padding-left:1.4px"><span style="letter-spacing:0.14px">United States</span></div>
<div class="cell" style="left:661.7px;top:241.9px;width:52.3px;padding-left:1.4px"><span style="display:inline-block;transform:scaleX(0.988);transform-origin:0 50%">Chicago</span></div>
<div class="t" style="left:7.4px;top:260.2px;font-size:10.8px;color:#555;">6</div>
<div class="cell" style="left:21.8px;top:258.6px;width:52.3px;padding-left:1.4px"><span style="display:inline-block;transform:scaleX(0.940);transform-origin:0 50%">E01639</span></div>
<div class="cell" style="left:75.1px;top:258.6px;width:52.3px;padding-left:1.4px"><span style="letter-spacing:0.21px">Austin Vo</span></div>
<div class="cell" style="left:128.4px;top:258.6px;width:52.3px;padding-left:1.4px"><span style="letter-spacing:0.13px">Sr. Analyst</span></div>
<div class="cell" style="left:181.7px;top:258.6px;width:52.3px;padding-left:1.4px"><span style="display:inline-block;transform:scaleX(0.998);transform-origin:0 50%">Finance</span></div>
<div class="cell" style="left:235.1px;top:258.6px;width:52.3px;padding-left:1.4px"><span style="letter-spacing:0.44px">Manufacturing</span></div>
<div class="cell" style="left:288.4px;top:258.6px;width:52.3px;padding-left:1.4px"><span style="letter-spacing:0.40px">Male</span></div>
<div class="cell" style="left:341.7px;top:258.6px;width:52.3px;padding-left:1.4px"><span style="display:inline-block;transform:scaleX(0.987);transform-origin:0 50%">Asian</span></div>
<div class="cell" style="left:555.0px;top:258.6px;width:52.3px;text-align:right;padding-right:2px"><span style="display:inline-block;transform:scaleX(0.908);transform-origin:100% 50%">0%</span></div>
<div class="cell" style="left:608.4px;top:258.6px;width:52.3px;padding-left:1.4px"><span style="letter-spacing:0.14px">United States</span></div>
<div class="cell" style="left:661.7px;top:258.6px;width:52.3px;padding-left:1.4px"><span style="letter-spacing:0.14px">Phoenix</span></div>
<div class="t" style="left:7.4px;top:276.8px;font-size:10.8px;color:#555;">7</div>
<div class="cell" style="left:21.8px;top:275.2px;width:52.3px;padding-left:1.4px"><span style="display:inline-block;transform:scaleX(0.940);transform-origin:0 50%">E00644</span></div>
<div class="cell" style="left:75.1px;top:275.2px;width:52.3px;padding-left:1.4px"><span style="letter-spacing:0.09px">Joshua Gupta</span></div>
<div class="cell" style="left:128.4px;top:275.2px;width:52.3px;padding-left:1.4px"><span style="letter-spacing:0.17px">Account Representative</span></div>
<div class="cell" style="left:181.7px;top:275.2px;width:52.3px;padding-left:1.4px"><span style="display:inline-block;transform:scaleX(0.925);transform-origin:0 50%">Sales</span></div>
<div class="cell" style="left:235.1px;top:275.2px;width:52.3px;padding-left:1.4px"><span style="letter-spacing:0.31px">Corporate</span></div>
<div class="cell" style="left:288.4px;top:275.2px;width:52.3px;padding-left:1.4px"><span style="letter-spacing:0.40px">Male</span></div>
<div class="cell" style="left:341.7px;top:275.2px;width:52.3px;padding-left:1.4px"><span style="display:inline-block;transform:scaleX(0.987);transform-origin:0 50%">Asian</span></div>
<div class="cell" style="left:555.0px;top:275.2px;width:52.3px;text-align:right;padding-right:2px"><span style="display:inline-block;transform:scaleX(0.908);transform-origin:100% 50%">0%</span></div>
<div class="cell" style="left:608.4px;top:275.2px;width:52.3px;padding-left:1.4px"><span style="letter-spacing:0.02px">China</span></div>
<div class="a" style="left:714px;top:275px;width:1px;height:15px;background:#fff;"></div>
<div class="cell" style="left:661.7px;top:275.2px;width:70.0px;padding-left:1.4px"><span style="letter-spacing:0.21px">Chongqing</span></div>
<div class="t" style="left:7.4px;top:293.5px;font-size:10.8px;color:#555;">8</div>
<div class="cell" style="left:21.8px;top:291.9px;width:52.3px;padding-left:1.4px"><span style="display:inline-block;transform:scaleX(0.940);transform-origin:0 50%">E01550</span></div>
<div class="cell" style="left:75.1px;top:291.9px;width:52.3px;padding-left:1.4px"><span style="letter-spacing:0.01px">Ruby Barnes</span></div>
<div class="cell" style="left:128.4px;top:291.9px;width:52.3px;padding-left:1.4px"><span style="letter-spacing:0.34px">Manager</span></div>
<div class="cell" style="left:181.7px;top:291.9px;width:52.3px;padding-left:1.4px"><span style="display:inline-block;transform:scaleX(0.955);transform-origin:0 50%">IT</span></div>
<div class="cell" style="left:235.1px;top:291.9px;width:52.3px;padding-left:1.4px"><span style="letter-spacing:0.31px">Corporate</span></div>
<div class="cell" style="left:288.4px;top:291.9px;width:52.3px;padding-left:1.4px"><span style="display:inline-block;transform:scaleX(0.995);transform-origin:0 50%">Female</span></div>
<div class="cell" style="left:341.7px;top:291.9px;width:52.3px;padding-left:1.4px"><span style="display:inline-block;transform:scaleX(0.980);transform-origin:0 50%">Caucasian</span></div>
<div class="cell" style="left:555.0px;top:291.9px;width:52.3px;text-align:right;padding-right:2px"><span style="display:inline-block;transform:scaleX(0.925);transform-origin:100% 50%">10%</span></div>
<div class="cell" style="left:608.4px;top:291.9px;width:52.3px;padding-left:1.4px"><span style="letter-spacing:0.14px">United States</span></div>
<div class="cell" style="left:661.7px;top:291.9px;width:52.3px;padding-left:1.4px"><span style="letter-spacing:0.14px">Phoenix</span></div>
<div class="t" style="left:7.4px;top:310.2px;font-size:10.8px;color:#555;">9</div>
<div class="cell" style="left:21.8px;top:308.6px;width:52.3px;padding-left:1.4px"><span style="display:inline-block;transform:scaleX(0.940);transform-origin:0 50%">E04332</span></div>
<div class="cell" style="left:75.1px;top:308.6px;width:52.3px;padding-left:1.4px"><span style="letter-spacing:0.32px">Luke Martin</span></div>
<div class="cell" style="left:128.4px;top:308.6px;width:52.3px;padding-left:1.4px"><span style="letter-spacing:0.18px">Analyst</span></div>
<div class="cell" style="left:181.7px;top:308.6px;width:52.3px;padding-left:1.4px"><span style="display:inline-block;transform:scaleX(0.998);transform-origin:0 50%">Finance</span></div>
<div class="cell" style="left:235.1px;top:308.6px;width:52.3px;padding-left:1.4px"><span style="letter-spacing:0.44px">Manufacturing</span></div>
<div class="cell" style="left:288.4px;top:308.6px;width:52.3px;padding-left:1.4px"><span style="letter-spacing:0.40px">Male</span></div>
<div class="cell" style="left:341.7px;top:308.6px;width:52.3px;padding-left:1.4px"><span style="display:inline-block;transform:scaleX(0.978);transform-origin:0 50%">Black</span></div>
<div class="cell" style="left:555.0px;top:308.6px;width:52.3px;text-align:right;padding-right:2px"><span style="display:inline-block;transform:scaleX(0.908);transform-origin:100% 50%">0%</span></div>
<div class="cell" style="left:608.4px;top:308.6px;width:52.3px;padding-left:1.4px"><span style="letter-spacing:0.14px">United States</span></div>
<div class="cell" style="left:661.7px;top:308.6px;width:52.3px;padding-left:1.4px"><span style="letter-spacing:0.57px">Miami</span></div>
<div class="cell" style="left:715.0px;top:308.6px;width:70.0px;padding-left:1.4px"><span style="letter-spacing:0.31px">5/20/2021</span></div>
<div class="t" style="left:4.5px;top:326.8px;font-size:10.8px;color:#555;transform:scaleX(0.971);transform-origin:0 50%;">10</div>
<div class="cell" style="left:21.8px;top:325.2px;width:52.3px;padding-left:1.4px"><span style="display:inline-block;transform:scaleX(0.940);transform-origin:0 50%">E04533</span></div>
<div class="cell" style="left:75.1px;top:325.2px;width:52.3px;padding-left:1.4px"><span style="display:inline-block;transform:scaleX(0.997);transform-origin:0 50%">Easton Bailey</span></div>
<div class="cell" style="left:128.4px;top:325.2px;width:52.3px;padding-left:1.4px"><span style="letter-spacing:0.34px">Manager</span></div>
<div class="cell" style="left:181.7px;top:325.2px;width:52.3px;padding-left:1.4px"><span style="letter-spacing:0.24px">Accounting</span></div>
<div class="cell" style="left:235.1px;top:325.2px;width:52.3px;padding-left:1.4px"><span style="letter-spacing:0.44px">Manufacturing</span></div>
<div class="cell" style="left:288.4px;top:325.2px;width:52.3px;padding-left:1.4px"><span style="letter-spacing:0.40px">Male</span></div>
<div class="cell" style="left:341.7px;top:325.2px;width:52.3px;padding-left:1.4px"><span style="display:inline-block;transform:scaleX(0.980);transform-origin:0 50%">Caucasian</span></div>
<div class="cell" style="left:555.0px;top:325.2px;width:52.3px;text-align:right;padding-right:2px"><span style="display:inline-block;transform:scaleX(0.908);transform-origin:100% 50%">6%</span></div>
<div class="cell" style="left:608.4px;top:325.2px;width:52.3px;padding-left:1.4px"><span style="letter-spacing:0.14px">United States</span></div>
<div class="cell" style="left:661.7px;top:325.2px;width:52.3px;padding-left:1.4px"><span style="letter-spacing:0.27px">Austin</span></div>
<div class="t" style="left:4.5px;top:343.5px;font-size:10.8px;color:#555;letter-spacing:0.23px;">11</div>
<div class="cell" style="left:21.8px;top:341.9px;width:52.3px;padding-left:1.4px"><span style="display:inline-block;transform:scaleX(0.940);transform-origin:0 50%">E03838</span></div>
<div class="cell" style="left:75.1px;top:341.9px;width:52.3px;padding-left:1.4px"><span style="letter-spacing:0.28px">Madeline Walker</span></div>
<div class="cell" style="left:128.4px;top:341.9px;width:52.3px;padding-left:1.4px"><span style="letter-spacing:0.13px">Sr. Analyst</span></div>
<div class="cell" style="left:181.7px;top:341.9px;width:52.3px;padding-left:1.4px"><span style="display:inline-block;transform:scaleX(0.998);transform-origin:0 50%">Finance</span></div>
<div class="cell" style="left:235.1px;top:341.9px;width:52.3px;padding-left:1.4px"><span style="letter-spacing:0.12px">Speciality Products</span></div>
<div class="cell" style="left:288.4px;top:341.9px;width:52.3px;padding-left:1.4px"><span style="display:inline-block;transform:scaleX(0.995);transform-origin:0 50%">Female</span></div>
<div class="cell" style="left:341.7px;top:341.9px;width:52.3px;padding-left:1.4px"><span style="display:inline-block;transform:scaleX(0.980);transform-origin:0 50%">Caucasian</span></div>
<div class="cell" style="left:555.0px;top:341.9px;width:52.3px;text-align:right;padding-right:2px"><span style="display:inline-block;transform:scaleX(0.908);transform-origin:100% 50%">0%</span></div>
<div class="cell" style="left:608.4px;top:341.9px;width:52.3px;padding-left:1.4px"><span style="letter-spacing:0.14px">United States</span></div>
<div class="cell" style="left:661.7px;top:341.9px;width:52.3px;padding-left:1.4px"><span style="display:inline-block;transform:scaleX(0.988);transform-origin:0 50%">Chicago</span></div>
<div class="t" style="left:4.5px;top:360.2px;font-size:10.8px;color:#555;transform:scaleX(0.971);transform-origin:0 50%;">12</div>
<div class="cell" style="left:21.8px;top:358.6px;width:52.3px;padding-left:1.4px"><span style="display:inline-block;transform:scaleX(0.940);transform-origin:0 50%">E00591</span></div>
<div class="cell" style="left:75.1px;top:358.6px;width:52.3px;padding-left:1.4px"><span style="letter-spacing:0.02px">Savannah Ali</span></div>
<div class="cell" style="left:128.4px;top:358.6px;width:52.3px;padding-left:1.4px"><span style="letter-spacing:0.22px">Sr. Manger</span></div>
<div class="cell" style="left:181.7px;top:358.6px;width:52.3px;padding-left:1.4px"><span style="letter-spacing:0.04px">Human Resources</span></div>
<div class="cell" style="left:235.1px;top:358.6px;width:52.3px;padding-left:1.4px"><span style="letter-spacing:0.44px">Manufacturing</span></div>
<div class="cell" style="left:288.4px;top:358.6px;width:52.3px;padding-left:1.4px"><span style="display:inline-block;transform:scaleX(0.995);transform-origin:0 50%">Female</span></div>
<div class="cell" style="left:341.7px;top:358.6px;width:52.3px;padding-left:1.4px"><span style="display:inline-block;transform:scaleX(0.987);transform-origin:0 50%">Asian</span></div>
<div class="cell" style="left:555.0px;top:358.6px;width:52.3px;text-align:right;padding-right:2px"><span style="display:inline-block;transform:scaleX(0.908);transform-origin:100% 50%">0%</span></div>
<div class="cell" style="left:608.4px;top:358.6px;width:52.3px;padding-left:1.4px"><span style="letter-spacing:0.02px">China</span></div>
<div class="a" style="left:714px;top:359px;width:1px;height:15px;background:#fff;"></div>
<div class="cell" style="left:661.7px;top:358.6px;width:70.0px;padding-left:1.4px"><span style="letter-spacing:0.21px">Chongqing</span></div>
<div class="t" style="left:4.5px;top:376.8px;font-size:10.8px;color:#555;transform:scaleX(0.971);transform-origin:0 50%;">13</div>
<div class="cell" style="left:21.8px;top:375.2px;width:52.3px;padding-left:1.4px"><span style="display:inline-block;transform:scaleX(0.940);transform-origin:0 50%">E03344</span></div>
<div class="cell" style="left:75.1px;top:375.2px;width:52.3px;padding-left:1.4px"><span style="display:inline-block;transform:scaleX(0.980);transform-origin:0 50%">Camila Rogers</span></div>
<div class="cell" style="left:128.4px;top:375.2px;width:52.3px;padding-left:1.4px"><span style="letter-spacing:0.11px">Controls Engineer</span></div>
<div class="cell" style="left:181.7px;top:375.2px;width:52.3px;padding-left:1.4px"><span style="letter-spacing:0.06px">Engineering</span></div>
<div class="cell" style="left:235.1px;top:375.2px;width:52.3px;padding-left:1.4px"><span style="letter-spacing:0.12px">Speciality Products</span></div>
<div class="cell" style="left:288.4px;top:375.2px;width:52.3px;padding-left:1.4px"><span style="display:inline-block;transform:scaleX(0.995);transform-origin:0 50%">Female</span></div>
<div class="cell" style="left:341.7px;top:375.2px;width:52.3px;padding-left:1.4px"><span style="display:inline-block;transform:scaleX(0.980);transform-origin:0 50%">Caucasian</span></div>
<div class="cell" style="left:555.0px;top:375.2px;width:52.3px;text-align:right;padding-right:2px"><span style="display:inline-block;transform:scaleX(0.908);transform-origin:100% 50%">0%</span></div>
<div class="cell" style="left:608.4px;top:375.2px;width:52.3px;padding-left:1.4px"><span style="letter-spacing:0.14px">United States</span></div>
<div class="cell" style="left:661.7px;top:375.2px;width:52.3px;padding-left:1.4px"><span style="letter-spacing:0.08px">Seattle</span></div>
<div class="t" style="left:4.5px;top:393.5px;font-size:10.8px;color:#555;transform:scaleX(0.971);transform-origin:0 50%;">14</div>
<div class="cell" style="left:21.8px;top:391.9px;width:52.3px;padding-left:1.4px"><span style="display:inline-block;transform:scaleX(0.940);transform-origin:0 50%">E00530</span></div>
<div class="cell" style="left:75.1px;top:391.9px;width:52.3px;padding-left:1.4px"><span style="display:inline-block;transform:scaleX(0.951);transform-origin:0 50%">Eli Jones</span></div>
<div class="cell" style="left:128.4px;top:391.9px;width:52.3px;padding-left:1.4px"><span style="letter-spacing:0.34px">Manager</span></div>
<div class="cell" style="left:181.7px;top:391.9px;width:52.3px;padding-left:1.4px"><span style="letter-spacing:0.04px">Human Resources</span></div>
<div class="cell" style="left:235.1px;top:391.9px;width:52.3px;padding-left:1.4px"><span style="letter-spacing:0.44px">Manufacturing</span></div>
<div class="cell" style="left:288.4px;top:391.9px;width:52.3px;padding-left:1.4px"><span style="letter-spacing:0.40px">Male</span></div>
<div class="cell" style="left:341.7px;top:391.9px;width:52.3px;padding-left:1.4px"><span style="display:inline-block;transform:scaleX(0.980);transform-origin:0 50%">Caucasian</span></div>
<div class="cell" style="left:555.0px;top:391.9px;width:52.3px;text-align:right;padding-right:2px"><span style="display:inline-block;transform:scaleX(0.908);transform-origin:100% 50%">0%</span></div>
<div class="cell" style="left:608.4px;top:391.9px;width:52.3px;padding-left:1.4px"><span style="letter-spacing:0.14px">United States</span></div>
<div class="cell" style="left:661.7px;top:391.9px;width:52.3px;padding-left:1.4px"><span style="letter-spacing:0.27px">Austin</span></div>
<div class="t" style="left:4.5px;top:410.2px;font-size:10.8px;color:#555;transform:scaleX(0.971);transform-origin:0 50%;">15</div>
<div class="cell" style="left:21.8px;top:408.6px;width:52.3px;padding-left:1.4px"><span style="display:inline-block;transform:scaleX(0.940);transform-origin:0 50%">E04239</span></div>
<div class="cell" style="left:75.1px;top:408.6px;width:52.3px;padding-left:1.4px"><span style="display:inline-block;transform:scaleX(0.984);transform-origin:0 50%">Everleigh Ng</span></div>
<div class="cell" style="left:128.4px;top:408.6px;width:52.3px;padding-left:1.4px"><span style="letter-spacing:0.22px">Sr. Manger</span></div>
<div class="cell" style="left:181.7px;top:408.6px;width:52.3px;padding-left:1.4px"><span style="display:inline-block;transform:scaleX(0.998);transform-origin:0 50%">Finance</span></div>
<div class="cell" style="left:235.1px;top:408.6px;width:52.3px;padding-left:1.4px"><span style="letter-spacing:0.13px">Research &amp; Development</span></div>
<div class="cell" style="left:288.4px;top:408.6px;width:52.3px;padding-left:1.4px"><span style="display:inline-block;transform:scaleX(0.995);transform-origin:0 50%">Female</span></div>
<div class="cell" style="left:341.7px;top:408.6px;width:52.3px;padding-left:1.4px"><span style="display:inline-block;transform:scaleX(0.987);transform-origin:0 50%">Asian</span></div>
<div class="cell" style="left:555.0px;top:408.6px;width:52.3px;text-align:right;padding-right:2px"><span style="display:inline-block;transform:scaleX(0.908);transform-origin:100% 50%">0%</span></div>
<div class="cell" style="left:608.4px;top:408.6px;width:52.3px;padding-left:1.4px"><span style="letter-spacing:0.02px">China</span></div>
<div class="cell" style="left:661.7px;top:408.6px;width:52.3px;padding-left:1.4px"><span style="letter-spacing:0.02px">Shanghai</span></div>
<div class="t" style="left:4.5px;top:426.9px;font-size:10.8px;color:#555;transform:scaleX(0.971);transform-origin:0 50%;">16</div>
<div class="cell" style="left:21.8px;top:425.2px;width:52.3px;padding-left:1.4px"><span style="display:inline-block;transform:scaleX(0.940);transform-origin:0 50%">E03496</span></div>
<div class="cell" style="left:75.1px;top:425.2px;width:52.3px;padding-left:1.4px"><span style="letter-spacing:0.11px">Robert Yang</span></div>
<div class="cell" style="left:128.4px;top:425.2px;width:52.3px;padding-left:1.4px"><span style="letter-spacing:0.13px">Sr. Analyst</span></div>
<div class="cell" style="left:181.7px;top:425.2px;width:52.3px;padding-left:1.4px"><span style="letter-spacing:0.24px">Accounting</span></div>
<div class="cell" style="left:235.1px;top:425.2px;width:52.3px;padding-left:1.4px"><span style="letter-spacing:0.12px">Speciality Products</span></div>
<div class="cell" style="left:288.4px;top:425.2px;width:52.3px;padding-left:1.4px"><span style="letter-spacing:0.40px">Male</span></div>
<div class="cell" style="left:341.7px;top:425.2px;width:52.3px;padding-left:1.4px"><span style="display:inline-block;transform:scaleX(0.987);transform-origin:0 50%">Asian</span></div>
<div class="cell" style="left:555.0px;top:425.2px;width:52.3px;text-align:right;padding-right:2px"><span style="display:inline-block;transform:scaleX(0.908);transform-origin:100% 50%">0%</span></div>
<div class="cell" style="left:608.4px;top:425.2px;width:52.3px;padding-left:1.4px"><span style="letter-spacing:0.14px">United States</span></div>
<div class="cell" style="left:661.7px;top:425.2px;width:52.3px;padding-left:1.4px"><span style="letter-spacing:0.27px">Austin</span></div>
<div class="t" style="left:4.5px;top:443.5px;font-size:10.8px;color:#555;transform:scaleX(0.971);transform-origin:0 50%;">17</div>
<div class="cell" style="left:21.8px;top:441.9px;width:52.3px;padding-left:1.4px"><span style="display:inline-block;transform:scaleX(0.940);transform-origin:0 50%">E00549</span></div>
<div class="cell" style="left:75.1px;top:441.9px;width:52.3px;padding-left:1.4px"><span style="display:inline-block;transform:scaleX(0.987);transform-origin:0 50%">Isabella Xi</span></div>
<div class="cell" style="left:128.4px;top:441.9px;width:52.3px;padding-left:1.4px"><span style="letter-spacing:0.04px">Vice President</span></div>
<div class="cell" style="left:181.7px;top:441.9px;width:52.3px;padding-left:1.4px"><span style="letter-spacing:0.47px">Marketing</span></div>
<div class="cell" style="left:235.1px;top:441.9px;width:52.3px;padding-left:1.4px"><span style="letter-spacing:0.13px">Research &amp; Development</span></div>
<div class="cell" style="left:288.4px;top:441.9px;width:52.3px;padding-left:1.4px"><span style="display:inline-block;transform:scaleX(0.995);transform-origin:0 50%">Female</span></div>
<div class="cell" style="left:341.7px;top:441.9px;width:52.3px;padding-left:1.4px"><span style="display:inline-block;transform:scaleX(0.987);transform-origin:0 50%">Asian</span></div>
<div class="cell" style="left:555.0px;top:441.9px;width:52.3px;text-align:right;padding-right:2px"><span style="display:inline-block;transform:scaleX(0.908);transform-origin:100% 50%">0%</span></div>
<div class="cell" style="left:608.4px;top:441.9px;width:52.3px;padding-left:1.4px"><span style="letter-spacing:0.14px">United States</span></div>
<div class="cell" style="left:661.7px;top:441.9px;width:52.3px;padding-left:1.4px"><span style="letter-spacing:0.08px">Seattle</span></div>
<div class="a" style="left:0px;top:457.59000000000003px;width:20.75px;height:16.17px;background:#e1e1e1;border-right:2px solid #217346"></div>
<div class="t" style="left:4.4px;top:460.2px;font-size:10.8px;color:#217346;font-weight:bold;letter-spacing:0.06px;">18</div>
<div class="cell" style="left:21.8px;top:458.6px;width:52.3px;padding-left:1.4px"><span style="display:inline-block;transform:scaleX(0.940);transform-origin:0 50%">E00163</span></div>
<div class="cell" style="left:75.1px;top:458.6px;width:52.3px;padding-left:1.4px"><span style="display:inline-block;transform:scaleX(0.991);transform-origin:0 50%">Bella Powell</span></div>
<div class="cell" style="left:128.4px;top:458.6px;width:52.3px;padding-left:1.4px"><span style="letter-spacing:0.27px">Director</span></div>
<div class="cell" style="left:181.7px;top:458.6px;width:52.3px;padding-left:1.4px"><span style="display:inline-block;transform:scaleX(0.998);transform-origin:0 50%">Finance</span></div>
<div class="cell" style="left:235.1px;top:458.6px;width:52.3px;padding-left:1.4px"><span style="letter-spacing:0.13px">Research &amp; Development</span></div>
<div class="cell" style="left:288.4px;top:458.6px;width:52.3px;padding-left:1.4px"><span style="display:inline-block;transform:scaleX(0.995);transform-origin:0 50%">Female</span></div>
<div class="cell" style="left:341.7px;top:458.6px;width:52.3px;padding-left:1.4px"><span style="display:inline-block;transform:scaleX(0.978);transform-origin:0 50%">Black</span></div>
<div class="cell" style="left:395.1px;top:458.6px;width:52.3px;text-align:right;padding-right:2px"><span style="display:inline-block;transform:scaleX(0.971);transform-origin:100% 50%">65</span></div>
<div class="cell" style="left:448.4px;top:458.6px;width:52.3px;text-align:right;padding-right:2px"><span style="display:inline-block;transform:scaleX(0.964);transform-origin:100% 50%">03-04-02</span></div>
<div class="cell" style="left:501.7px;top:458.6px;width:52.3px;text-align:right;padding-right:2px"><span style="display:inline-block;transform:scaleX(0.980);transform-origin:100% 50%">$175,837</span></div>
<div class="cell" style="left:555.0px;top:458.6px;width:52.3px;text-align:right;padding-right:2px"><span style="display:inline-block;transform:scaleX(0.925);transform-origin:100% 50%">20%</span></div>
<div class="cell" style="left:608.4px;top:458.6px;width:52.3px;padding-left:1.4px"><span style="letter-spacing:0.14px">United States</span></div>
<div class="cell" style="left:661.7px;top:458.6px;width:52.3px;padding-left:1.4px"><span style="letter-spacing:0.14px">Phoenix</span></div>
<div class="t" style="left:4.5px;top:476.9px;font-size:10.8px;color:#555;transform:scaleX(0.971);transform-origin:0 50%;">19</div>
<div class="cell" style="left:21.8px;top:475.3px;width:52.3px;padding-left:1.4px"><span style="display:inline-block;transform:scaleX(0.940);transform-origin:0 50%">E00884</span></div>
<div class="cell" style="left:75.1px;top:475.3px;width:52.3px;padding-left:1.4px"><span style="display:inline-block;transform:scaleX(0.972);transform-origin:0 50%">Camila Silva</span></div>
<div class="cell" style="left:128.4px;top:475.3px;width:52.3px;padding-left:1.4px"><span style="letter-spacing:0.22px">Sr. Manger</span></div>
<div class="cell" style="left:181.7px;top:475.3px;width:52.3px;padding-left:1.4px"><span style="letter-spacing:0.47px">Marketing</span></div>
<div class="cell" style="left:235.1px;top:475.3px;width:52.3px;padding-left:1.4px"><span style="letter-spacing:0.12px">Speciality Products</span></div>
<div class="cell" style="left:288.4px;top:475.3px;width:52.3px;padding-left:1.4px"><span style="display:inline-block;transform:scaleX(0.995);transform-origin:0 50%">Female</span></div>
<div class="cell" style="left:341.7px;top:475.3px;width:52.3px;padding-left:1.4px"><span style="letter-spacing:0.23px">Latino</span></div>
<div class="a" style="left:393.06px;top:456.09000000000003px;width:55.33px;height:18.67px;border:2px solid #217346"></div>
<div class="a" style="left:444.89px;top:471.26000000000005px;width:5px;height:5px;background:#217346;border:1px solid #fff"></div>
<div class="a" style="left:782.5px;top:157px;width:17.5px;height:329px;background:#fff;"></div>
<div class="a" style="left:782.5px;top:174px;width:1px;height:311.5px;background:#d0d0d0;"></div>
<div class="a" style="left:786.3px;top:186px;width:11.6px;height:288px;background:#e9e9e9;"></div>
<div class="a" style="left:786.3px;top:160.3px;width:11.6px;height:12.4px;background:#fff;border:1px solid #c4c4c4"></div>
<svg class="a" style="left:789.3px;top:164.5px;" width="6" height="3.5" viewBox="0 0 6 3.5"><path d="M0 3.5L3 0L6 3.5Z" fill="#777"/></svg>
<div class="a" style="left:786.3px;top:172.2px;width:11.6px;height:14.4px;background:#fff;border:1px solid #c4c4c4"></div>
<div class="a" style="left:786.3px;top:473px;width:11.6px;height:12.6px;background:#fff;border:1px solid #c4c4c4"></div>
<svg class="a" style="left:789.3px;top:477.5px;" width="6" height="3.5" viewBox="0 0 6 3.5"><path d="M0 0L3 3.5L6 0Z" fill="#555"/></svg>
<svg class="a" style="left:0;top:0;opacity:.55" width="800" height="527"><g transform="translate(231.3,193.7) scale(1.18,1)"><text x="0" y="0" font-family="Liberation Sans, sans-serif" font-weight="bold" font-size="58.5" fill="#6ec5ee" stroke="#6ec5ee" stroke-width="1.5" stroke-linejoin="round">S</text></g><g transform="translate(269,193.7) scale(1.07,1)"><text x="0" y="0" font-family="Liberation Sans, sans-serif" font-weight="bold" font-size="58.5" fill="#8a8bd0" stroke="#8a8bd0" stroke-width="1.5" stroke-linejoin="round">B</text></g></svg>
<div class="a" style="left:0px;top:485.7px;width:800px;height:22.6px;background:#f3f3f3;border-top:1px solid #c8c8c8"></div>
<svg class="a" style="left:22px;top:492.5px;" width="4" height="7" viewBox="0 0 4 7"><path d="M4 0V7L0 3.5Z" fill="#c6c6c6"/></svg>
<svg class="a" style="left:46px;top:492.5px;" width="4" height="7" viewBox="0 0 4 7"><path d="M0 0V7L4 3.5Z" fill="#c6c6c6"/></svg>
<div class="a" style="left:83.7px;top:485.7px;width:138px;height:20px;background:#fff;border-bottom:2.5px solid #217346"></div>
<div class="t" style="left:93.5px;top:489.5px;font-size:10.5px;color:#217346;font-weight:bold;transform:scaleX(0.974);transform-origin:0 50%;">Employee Sample Data</div>
<svg class="a" style="left:249px;top:489.5px;" width="13" height="13" viewBox="0 0 13 13"><circle cx="6.5" cy="6.5" r="5.8" fill="none" stroke="#777" stroke-width="1"/><path d="M3.5 6.5H9.5M6.5 3.5V9.5" stroke="#666" stroke-width="1.3"/></svg>
<div class="a" style="left:600px;top:486.2px;width:200px;height:22px;background:#fff;"></div>
<div class="a" style="left:600px;top:491.5px;width:200px;height:1px;background:#dedede;"></div>
<div class="a" style="left:600px;top:504px;width:200px;height:4.4px;background:#e6e6e6;"></div>
<div class="a" style="left:600px;top:485.2px;width:183px;height:1px;background:#bdbdbd;"></div>
<div class="a" style="left:623.8px;top:477px;width:9px;height:7.8px;background:#d6d6d6;"></div>
<div class="a" style="left:632.8px;top:477px;width:8.6px;height:7.8px;background:#e6e6e6;"></div>
<div class="a" style="left:0px;top:508.2px;width:800px;height:19px;background:#217346;"></div>
<div class="a" style="left:0px;top:525.6px;width:800px;height:1.4px;background:#dfe9e3;"></div>
<div class="t" style="left:6.2px;top:510.5px;font-size:9.5px;color:#fff;transform:scaleX(0.810);transform-origin:0 50%;">READY</div>
<div class="t" style="left:761.0px;top:509.7px;font-size:9.5px;color:#fff;transform:scaleX(0.988);transform-origin:0 50%;">100%</div>
<div class="a" style="left:624px;top:511px;width:9.5px;height:9.5px;border:1.5px solid #fff"></div>
<div class="a" style="left:626.5px;top:513px;width:2px;height:6px;background:#fff;"></div>
<div class="a" style="left:629.5px;top:513px;width:2px;height:6px;background:#fff;"></div>
<div class="a" style="left:647px;top:516.5px;width:6px;height:1.5px;background:#fff;"></div>
<div class="a" style="left:656.5px;top:517px;width:83.5px;height:1px;background:#cfe0d6;"></div>
<div class="a" style="left:697.5px;top:512px;width:3px;height:10px;background:#fff;"></div>
<div class="a" style="left:743px;top:516.5px;width:7px;height:1.5px;background:#fff;"></div>
<div class="a" style="left:745.8px;top:514px;width:1.5px;height:7px;background:#fff;"></div>
<div class="a" style="left:410px;top:133px;width:170px;height:335px;background:#fff;border:1px solid #c6c6c6;box-shadow:1.5px 1.5px 3px rgba(0,0,0,.22);"></div>
<div class="a" style="left:431.7px;top:175px;width:147.3px;height:19px;background:#eeeeee;"></div>
<div class="a" style="left:411px;top:343px;width:168px;height:20px;background:#d3e9dc;"></div>
<div class="t" style="left:437.5px;top:138.0px;font-size:10px;color:#646464;transform:scaleX(0.996);transform-origin:0 50%;">Cu<u>t</u></div>
<div class="t" style="left:437.5px;top:158.5px;font-size:10px;color:#646464;transform:scaleX(0.994);transform-origin:0 50%;"><u>C</u>opy</div>
<div class="t" style="left:437.5px;top:222.3px;font-size:10px;color:#646464;transform:scaleX(0.918);transform-origin:0 50%;">Paste <u>S</u>pecial...</div>
<div class="t" style="left:437.5px;top:244.3px;font-size:10px;color:#646464;transform:scaleX(0.936);transform-origin:0 50%;"><u>I</u>nsert...</div>
<div class="t" style="left:437.5px;top:264.1px;font-size:10px;color:#646464;transform:scaleX(0.913);transform-origin:0 50%;"><u>D</u>elete...</div>
<div class="t" style="left:437.5px;top:284.5px;font-size:10px;color:#646464;transform:scaleX(0.975);transform-origin:0 50%;">Clear Co<u>n</u>tents</div>
<div class="t" style="left:437.5px;top:306.0px;font-size:10px;color:#646464;transform:scaleX(0.987);transform-origin:0 50%;"><u>Q</u>uick Analysis</div>
<div class="t" style="left:437.5px;top:325.9px;font-size:10px;color:#646464;transform:scaleX(0.994);transform-origin:0 50%;">Filt<u>e</u>r</div>
<div class="t" style="left:437.5px;top:346.1px;font-size:10px;color:#646464;transform:scaleX(0.981);transform-origin:0 50%;">S<u>o</u>rt</div>
<div class="t" style="left:437.5px;top:367.5px;font-size:10px;color:#646464;letter-spacing:0.04px;">Insert Co<u>m</u>ment</div>
<div class="t" style="left:437.5px;top:389.5px;font-size:10px;color:#646464;transform:scaleX(0.961);transform-origin:0 50%;"><u>F</u>ormat Cells...</div>
<div class="t" style="left:437.5px;top:409.0px;font-size:10px;color:#646464;transform:scaleX(0.997);transform-origin:0 50%;">Pic<u>k</u> From Drop-down List...</div>
<div class="t" style="left:437.5px;top:429.5px;font-size:10px;color:#646464;transform:scaleX(0.975);transform-origin:0 50%;">Define N<u>a</u>me...</div>
<div class="t" style="left:437.5px;top:449.5px;font-size:10px;color:#646464;transform:scaleX(0.990);transform-origin:0 50%;">Hyperl<u>i</u>nk...</div>
<div class="t" style="left:437.5px;top:178.0px;font-size:10px;color:#555;font-weight:bold;transform:scaleX(0.938);transform-origin:0 50%;">Paste Options:</div>
<div class="a" style="left:437.5px;top:239.0px;width:141px;height:1px;background:#e3e3e3;"></div>
<div class="a" style="left:437.5px;top:300.5px;width:141px;height:1px;background:#e3e3e3;"></div>
<div class="a" style="left:437.5px;top:384.0px;width:141px;height:1px;background:#e3e3e3;"></div>
<svg class="a" style="left:568.5px;top:328.9px;" width="4" height="7" viewBox="0 0 4 7"><path d="M0 0V7L4 3.5Z" fill="#666"/></svg>
<svg class="a" style="left:568.5px;top:349.1px;" width="4" height="7" viewBox="0 0 4 7"><path d="M0 0V7L4 3.5Z" fill="#666"/></svg>
<svg class="a" style="left:415px;top:138.7px;" width="13" height="12" viewBox="0 0 13 12"><path d="M2.2 .3L9.2 8M10.8 .3L3.8 8" stroke="#555" stroke-width="1.5" fill="none"/><circle cx="2.8" cy="9.5" r="2" fill="none" stroke="#3b78c4" stroke-width="1.3"/><circle cx="10.2" cy="9.5" r="2" fill="none" stroke="#3b78c4" stroke-width="1.3"/></svg>
<svg class="a" style="left:414.5px;top:159px;" width="14" height="12" viewBox="0 0 14 12"><path d="M.5 .5H5L7 2.5V8.5H.5Z" fill="#fff" stroke="#777" stroke-width="1"/><path d="M2 3.5h3M2 5.5h3" stroke="#3b78c4" stroke-width="1"/><path d="M6.5 3.5H11L13 5.5V11.5H6.5Z" fill="#fff" stroke="#777" stroke-width="1"/><path d="M8 6.5h3.5M8 8.3h3.5M8 10h3.5" stroke="#3b78c4" stroke-width=".9"/></svg>
<svg class="a" style="left:415.5px;top:177.5px;" width="13" height="13.5" viewBox="0 0 13 13.5"><rect x="0" y="1.5" width="10" height="11" rx=".6" fill="#eabf6e"/><path d="M2.2 3.4V2H3.8A1.3 1.3 0 0 1 6.2 2H7.8V3.4Z" fill="#777"/><path d="M6 6.5H10.2L12.5 8.8V13.2H6Z" fill="#fff" stroke="#888" stroke-width="1"/></svg>
<svg class="a" style="left:437px;top:197px;" width="17" height="19.5" viewBox="0 0 17 19.5"><rect x="0" y="2" width="14.5" height="17" rx=".8" fill="#eabf6e"/><path d="M3.6 4.6V2.6H5.6A1.8 1.8 0 0 1 9 2.6H11V4.6Z" fill="#6d6d6d"/><rect x="1.8" y="5" width="10.9" height="12.4" fill="#fff"/><path d="M3 7.4h8.6" stroke="#d9442f" stroke-width="1.2"/><path d="M3 9.6h8.6M3 11.6h8.6M3 13.6h5" stroke="#9fb9dd" stroke-width="1"/><path d="M16.6 7.2L11 14L9.6 13L15 6.2Z" fill="#555"/><path d="M10.6 13.6C10.4 16.2 8.4 18.4 5.4 17.6C7.2 17 7.6 15 8.4 13.4Z" fill="#3b78c4"/></svg>
<svg class="a" style="left:461.7px;top:197px;" width="17" height="19.5" viewBox="0 0 17 19.5"><rect x="0" y="2" width="14.5" height="17" rx=".8" fill="#eabf6e"/><path d="M3.6 4.6V2.6H5.6A1.8 1.8 0 0 1 9 2.6H11V4.6Z" fill="#6d6d6d"/><rect x="1.8" y="5" width="10.9" height="12.4" fill="#fff"/><path d="M3.6 7.6h7.4M3.6 9.8h7.4M3.6 12h7.4M3.6 14.2h7.4" stroke="#3b78c4" stroke-width="1.1"/></svg>
<svg class="a" style="left:415.2px;top:306px;" width="13" height="13" viewBox="0 0 13 13"><rect x="2.5" y="1.5" width="10" height="11" fill="#fff" stroke="#777"/><path d="M4 4h7" stroke="#d9442f" stroke-width="1.4"/><path d="M4 6.4h7M4 8.6h7M4 10.8h7" stroke="#3b78c4" stroke-width="1.2"/><path d="M3.6 0L.4 4.6H2.6L1 8.4L5 3.4H2.8Z" fill="#f0a30a"/></svg>
<svg class="a" style="left:415px;top:367.5px;" width="13.5" height="12.5" viewBox="0 0 13.5 12.5"><path d="M2.5 2.5H13V9L10 12H2.5Z" fill="#fff" stroke="#666" stroke-width="1"/><path d="M10 12V9H13" fill="none" stroke="#666" stroke-width="1"/><path d="M2.2 0V4.4M0 2.2H4.4M.7 .7L3.7 3.7M3.7 .7L.7 3.7" stroke="#f0a30a" stroke-width=".9"/></svg>
<svg class="a" style="left:415.2px;top:390px;" width="13" height="12.6" viewBox="0 0 13 12.6"><rect x=".5" y=".5" width="12" height="11.6" fill="#fff" stroke="#555"/><rect x=".5" y=".5" width="12" height="2.4" fill="#3b78c4"/><path d="M2.6 5.6h1.6M2.6 8.8h1.6" stroke="#555" stroke-width="1.5"/><path d="M5.8 5.6h4.8M5.8 8.8h4.8" stroke="#555" stroke-width="1"/></svg>
<svg class="a" style="left:416.3px;top:449.4px;" width="12.5" height="13.6" viewBox="0 0 12.5 13.6"><circle cx="6" cy="5.2" r="4.6" fill="#fff" stroke="#666" stroke-width="1"/><path d="M1.4 5.2H10.6M6 .6V9.8M6 .6C3.4 2.8 3.4 7.6 6 9.8M6 .6C8.6 2.8 8.6 7.6 6 9.8" fill="none" stroke="#666" stroke-width=".8"/><rect x=".8" y="8.4" width="6" height="4.2" rx="2.1" fill="#fff" stroke="#3b78c4" stroke-width="1.4"/><rect x="5.6" y="8.4" width="6" height="4.2" rx="2.1" fill="none" stroke="#3b78c4" stroke-width="1.4"/></svg>
<div class="a" style="left:580px;top:342.5px;width:184.5px;height:122.3px;background:#fff;border:1px solid #c6c6c6;box-shadow:1.5px 1.5px 3px rgba(0,0,0,.22);"></div>
<div class="a" style="left:581px;top:385px;width:182.5px;height:19px;background:#d3e9dc;"></div>
<div class="t" style="left:606.9px;top:347.9px;font-size:10px;color:#646464;transform:scaleX(0.962);transform-origin:0 50%;"><u>S</u>ort Smallest to Largest</div>
<div class="t" style="left:606.9px;top:368.0px;font-size:10px;color:#646464;transform:scaleX(0.962);transform-origin:0 50%;">S<u>o</u>rt Largest to Smallest</div>
<div class="t" style="left:606.9px;top:388.2px;font-size:10px;color:#646464;transform:scaleX(0.974);transform-origin:0 50%;">Put Selected <u>C</u>ell Color On Top</div>
<div class="t" style="left:606.9px;top:407.4px;font-size:10px;color:#646464;transform:scaleX(0.977);transform-origin:0 50%;">Put Selected <u>F</u>ont Color On Top</div>
<div class="t" style="left:606.9px;top:427.8px;font-size:10px;color:#646464;transform:scaleX(0.971);transform-origin:0 50%;">Put Selected Cell <u>I</u>con On Top</div>
<div class="t" style="left:606.9px;top:448.1px;font-size:10px;color:#646464;transform:scaleX(0.970);transform-origin:0 50%;">C<u>u</u>stom Sort...</div>
<svg class="a" style="left:585px;top:347.5px;" width="13" height="14" viewBox="0 0 13 14"><text x="0" y="6" font-size="7.5" font-weight="bold" font-family="Liberation Sans, sans-serif" fill="#3b78c4">A</text><text x="0" y="13.4" font-size="7.5" font-weight="bold" font-family="Liberation Sans, sans-serif" fill="#9b4fb0">Z</text><path d="M9.8 .5V12.6M7.4 10L9.8 12.8L12.2 10" fill="none" stroke="#555" stroke-width="1.1"/></svg>
<svg class="a" style="left:585px;top:367.5px;" width="13" height="14" viewBox="0 0 13 14"><text x="0" y="6" font-size="7.5" font-weight="bold" font-family="Liberation Sans, sans-serif" fill="#9b4fb0">Z</text><text x="0" y="13.4" font-size="7.5" font-weight="bold" font-family="Liberation Sans, sans-serif" fill="#3b78c4">A</text><path d="M9.8 .5V12.6M7.4 10L9.8 12.8L12.2 10" fill="none" stroke="#555" stroke-width="1.1"/></svg>
<svg class="a" style="left:584.5px;top:448px;" width="13.5" height="12.5" viewBox="0 0 13.5 12.5"><rect x=".5" y=".5" width="12.5" height="11.5" fill="#fff" stroke="#666"/><rect x=".5" y=".5" width="12.5" height="2.2" fill="#3b78c4"/><path d="M4.6 4.4V10M3 8.2L4.6 10L6.2 8.2" fill="none" stroke="#3b78c4" stroke-width="1.2"/><path d="M9 10V4.4M7.4 6.2L9 4.4L10.6 6.2" fill="none" stroke="#9b4fb0" stroke-width="1.2"/></svg>
<div class="a" style="left:410px;top:480.5px;width:213px;height:45.6px;background:#fff;border:1px solid #c6c6c6;box-shadow:1.5px 1.5px 3px rgba(0,0,0,.22);"></div>
<div class="a" style="left:413.4px;top:483.7px;width:53px;height:18.5px;background:#fff;border:1px solid #c6c6c6"></div>
<div class="t" style="left:416.5px;top:485.6px;font-size:10.5px;color:#333;transform:scaleX(0.914);transform-origin:0 50%;">Calibri</div>
<div class="dd" style="left:457.8px;top:491.3px;border-top-color:#777"></div>
<div class="a" style="left:467px;top:483.7px;width:32.5px;height:18.5px;background:#fff;border:1px solid #c6c6c6"></div>
<div class="t" style="left:470.3px;top:485.6px;font-size:10px;color:#333;letter-spacing:-0.8px;">11</div>
<div class="dd" style="left:491.2px;top:491.3px;border-top-color:#777"></div>
<div class="t" style="left:505.0px;top:486.1px;font-size:12.5px;color:#555;">A</div>
<svg class="a" style="left:513px;top:485.6px;" width="5" height="3" viewBox="0 0 5 3"><path d="M.5 3L2.5 .4L4.5 3Z" fill="#3b78c4"/></svg>
<div class="t" style="left:523.7px;top:487.1px;font-size:10.5px;color:#555;">A</div>
<svg class="a" style="left:530.2px;top:485.6px;" width="5" height="3" viewBox="0 0 5 3"><path d="M.5 0L2.5 2.6L4.5 0Z" fill="#3b78c4"/></svg>
<div class="t" style="left:543.0px;top:485.8px;font-size:12.5px;color:#555;">$</div>
<div class="dd" style="left:557.2px;top:491.8px;border-top-color:#777"></div>
<div class="t" style="left:569.0px;top:485.8px;font-size:12.5px;color:#555;">%</div>
<div class="t" style="left:589.8px;top:480.5px;font-size:14px;color:#555;font-weight:bold;">,</div>
<svg class="a" style="left:604px;top:487px;" width="13.5" height="13" viewBox="0 0 13.5 13"><rect x=".5" y=".5" width="12.5" height="12" fill="#fff" stroke="#777" stroke-width="1"/><path d="M.5 3.4H13M.5 9.6H13M6.75 .5V3.4M6.75 9.6V12.5" stroke="#777" stroke-width="1"/><path d="M2.8 6.5H10.7M4.2 5.1L2.8 6.5L4.2 7.9M9.3 5.1L10.7 6.5L9.3 7.9" fill="none" stroke="#3b78c4" stroke-width="1.1"/></svg>
<div class="t" style="left:418.0px;top:506.5px;font-size:10.5px;color:#444;font-weight:bold;">B</div>
<div class="t" style="left:437.5px;top:506.5px;font-size:10.5px;color:#444;font-family:'Liberation Serif',serif;font-style:italic;font-weight:bold;font-size:11.5px;">I</div>
<div class="a" style="left:453.5px;top:509.5px;width:11.5px;height:1px;background:#808080;"></div>
<div class="a" style="left:454.5px;top:512.8px;width:9.5px;height:1px;background:#808080;"></div>
<div class="a" style="left:453.5px;top:516.1px;width:11.5px;height:1px;background:#808080;"></div>
<svg class="a" style="left:471.5px;top:507px;" width="14" height="13" viewBox="0 0 14 13"><path d="M2.2 4.2L6.2 .8L11 5.6L6.4 9.2Z" fill="#fff" stroke="#666" stroke-width="1"/><path d="M5.2 .3V3.6" stroke="#666" stroke-width="1"/><path d="M10.6 4.6C12.4 5.4 13.2 7 13 9C12 8.2 11 7 10.6 4.6Z" fill="#3b78c4"/><rect x="0" y="10" width="13" height="3" fill="#ffeb00"/></svg>
<div class="dd" style="left:488.5px;top:512.3px;border-top-color:#777"></div>
<div class="t" style="left:501.5px;top:504.5px;font-size:11.5px;color:#555;">A</div>
<div class="a" style="left:499.3px;top:517px;width:13.5px;height:3px;background:#ee1c25;"></div>
<div class="dd" style="left:516.5px;top:512.3px;border-top-color:#777"></div>
<svg class="a" style="left:527.5px;top:508px;" width="12" height="12" viewBox="0 0 12 12"><rect x=".5" y=".5" width="11" height="11" fill="none" stroke="#aaa" stroke-width="1" stroke-dasharray="1 1"/><path d="M6.0 0V12M0 6.0H12" stroke="#999" stroke-width="1" stroke-dasharray="1 1"/><path d="M0 11.5H12" stroke="#888" stroke-width="1"/></svg>
<div class="dd" style="left:544.7px;top:512.3px;border-top-color:#777"></div>
<svg class="a" style="left:555.6px;top:508px;" width="12" height="12" viewBox="0 0 12 12"><text x="5.2" y="5" font-size="7.4" font-family="Liberation Sans, sans-serif" fill="#555">.0</text><text x="2.4" y="11" font-size="7.4" font-family="Liberation Sans, sans-serif" fill="#555">.00</text><path d="M5 2.7H.8M2.6 .9L.8 2.7L2.6 4.5" fill="none" stroke="#3b78c4" stroke-width="1.1"/></svg>
<svg class="a" style="left:574px;top:508px;" width="12" height="12" viewBox="0 0 12 12"><text x="2.4" y="5" font-size="7.4" font-family="Liberation Sans, sans-serif" fill="#555">.00</text><text x="6.4" y="11" font-size="7.4" font-family="Liberation Sans, sans-serif" fill="#555">.0</text><path d="M.8 9.3H5M3.2 7.5L5 9.3L3.2 11.1" fill="none" stroke="#3b78c4" stroke-width="1.1"/></svg>
<svg class="a" style="left:592.5px;top:507.5px;" width="14" height="12" viewBox="0 0 14 12"><path d="M0 6.3L4.2 3.2L8.4 8.2L5.6 12Z" fill="#eabf6e"/><path d="M4.8 2.8L6.6 1.4L10.8 6.6L9 8Z" fill="#666"/><path d="M8.6 2.9L12.4 .2L13.6 1.8L9.9 4.6Z" fill="#555"/></svg>
</body></html>
